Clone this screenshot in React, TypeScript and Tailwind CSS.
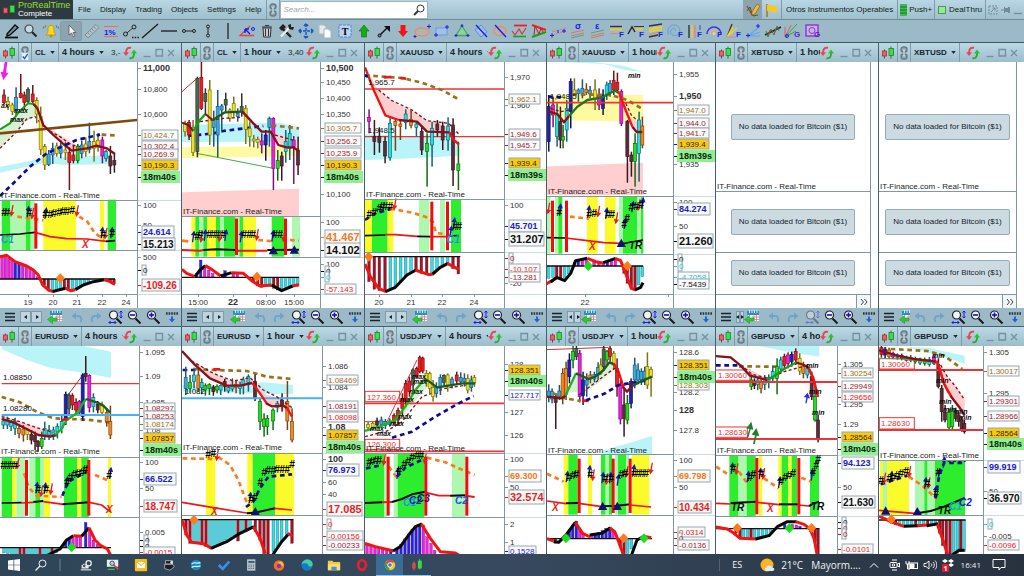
import type { ReactNode } from 'react'

/* ---------- palette ---------- */

const FILL = {
  r: '#f41c1c', y: '#f0e21a', c: '#3aa9e0', k: '#5e2c38', g: '#4a6a50', m: '#f41ce6',
  G: '#1fe01f', b: '#2020b4', o: '#f28a1c', t: '#22dfe8',
} as const

const WICK = {
  r: '#7a1018', y: '#7c7410', c: '#1c5878', k: '#3a1820', g: '#26382a', m: '#7c1076',
  G: '#126a12', b: '#14145c', o: '#7c4210', t: '#12686e',
} as const

const BAR = { ...FILL, k: '#a01420', b: '#2222f0', t: '#1ee6ee' } as const

const BAND = { g: '#2dee2d', l: '#aef7ae', y: '#fbfb2c' } as const

type Tone = keyof typeof FILL
type Candle = [x: number, high: number, low: number, top: number, bottom: number, tone: Tone]
type Bar = [x: number, y: number, tone: Tone]
type Band = [x: number, w: number, tone: keyof typeof BAND]
type Point = [x: number, y: number]
type Note = [x: number, y: number, text: string, color?: string, kind?: 'plain' | 'italic' | 'signal']

/* ---------- chart primitives, geometry is stored in thirds of a pixel ---------- */

function Line({ d, c, w = 6, dash }: { d: string; c: string; w?: number; dash?: boolean }) {
  return (
    <polyline
      points={d}
      fill="none"
      stroke={c}
      strokeWidth={w}
      strokeLinejoin="round"
      strokeDasharray={dash ? (w > 5 ? '14 11' : '9 7') : undefined}
    />
  )
}

const Area = ({ d, c }: { d: string; c: string }) => <polygon points={d} fill={c} />

function Candles({ data }: { data: Candle[] }) {
  return (
    <g>
      {data.map(([x, high, low, top, bottom, tone], i) => (
        <g key={i}>
          <rect x={x - 2} y={high} width={4.5} height={low - high} fill={WICK[tone]} />
          <rect x={x - 4.5} y={top} width={9} height={bottom - top} fill={FILL[tone]} stroke={WICK[tone]} strokeWidth={2} />
        </g>
      ))}
    </g>
  )
}

function Bars({ base, data, to }: { base: number; data: Bar[]; to: number }) {
  return (
    <g>
      {data.map(([x, y, tone], i) => (
        <rect key={i} x={x - 4} y={Math.min(y, base)} width={8} height={Math.abs(y - base)} fill={BAR[tone]} stroke="#5a2a4a" strokeWidth={1} />
      ))}
      <line x1={0} x2={to} y1={base} y2={base} stroke="#101010" strokeWidth={4} />
    </g>
  )
}

function Bands({ top, bottom, data }: { top: number; bottom: number; data: Band[] }) {
  return (
    <g>
      {data.map(([x, w, tone], i) => (
        <rect key={i} x={x} y={top} width={w} height={bottom - top} fill={BAND[tone]} />
      ))}
    </g>
  )
}

function Stops({ top, bottom, xs }: { top: number; bottom: number; xs: number[] }) {
  return <g>{xs.map(x => <rect key={x} x={x - 5} y={top + 7} width={9} height={bottom - top - 12} fill="#f40c0c" />)}</g>
}

const Arrow = ({ at: [x, y], c, down }: { at: Point; c: string; down?: boolean }) => (
  <path
    transform={`translate(${x} ${y})${down ? ' rotate(190)' : ' rotate(8)'}`}
    d="M-2 17V-4H-8L0-19L8-4H2V17Z"
    fill={c}
  />
)

const Arrows = ({ up = [], down = [] }: { up?: Point[]; down?: Point[] }) => (
  <g>
    {up.map((p, i) => <Arrow key={i} at={p} c="#1414c8" />)}
    {down.map((p, i) => <Arrow key={i} at={p} c="#f01c1c" down />)}
  </g>
)

const Diamond = ({ x, y, c = '#ff7a1a' }: { x: number; y: number; c?: string }) => (
  <path d={`M${x - 14} ${y}L${x} ${y - 15}L${x + 14} ${y}L${x} ${y + 15}Z`} fill={c} />
)

const Delta = ({ x, y }: { x: number; y: number }) => (
  <path d={`M${x - 14} ${y + 11}L${x} ${y - 14}L${x + 14} ${y + 11}Z`} fill="#10106e" />
)

const NOTE_CLASS = {
  plain: 'text-[8px]',
  italic: 'text-[7px] font-bold italic',
  signal: 'text-[10px] font-bold italic',
}

interface PlotProps {
  origin: Point
  splits: number[]
  credit: number
  notes?: Note[]
  hashes?: Point[]
  times?: [x: number, label: string, strong?: boolean][]
  children: ReactNode
}

function Plot({ origin: [ox, oy], splits, credit, notes = [], hashes = [], times = [], children }: PlotProps) {
  const px = (x: number) => Math.round((x - ox) / 3)
  const py = (y: number) => Math.round((y - oy) / 3)

  return (
    <svg className="h-full min-w-0 flex-1 bg-white">
      <g transform={`scale(0.33333) translate(${-ox} ${-oy})`}>{children}</g>
      {splits.map(y => <rect key={y} x={0} y={py(y)} width="100%" height={1} fill="#7f98a4" />)}
      {hashes.map(([x, y], i) => (
        <text key={i} x={px(x)} y={py(y) + 1} textAnchor="middle" className="text-[10px] font-bold italic">#</text>
      ))}
      {notes.map(([x, y, text, color = '#101010', kind = 'plain'], i) => (
        <text key={i} x={px(x)} y={py(y)} fill={color} className={NOTE_CLASS[kind]}>{text}</text>
      ))}
      <text x={1} y={py(credit)} fill="#222" className="text-[8px]">IT-Finance.com - Real-Time</text>
      {times.map(([x, label, strong], i) => (
        <g key={i}>
          <rect x={px(x)} y={py(763)} width={1} height={3} fill="#7f98a4" />
          <text x={px(x)} y={py(794)} textAnchor="middle" fill="#333" className={strong ? 'text-[9px] font-bold' : 'text-[8px]'}>{label}</text>
        </g>
      ))}
    </svg>
  )
}

/* ---------- price axis ---------- */

type Tick = [y: number, text: string, style?: string, size?: number]

const TAG_COLOR: Record<string, string> = {
  tan: '#9a7424', dred: '#a81c2c', red: '#f01c1c', blue: '#2020d0', black: '#101010',
  orange: '#f47a1c', cyan: '#1cc8d4', last: '#2a2a10', timer: '#10240c',
}

const SIZE_CLASS: Record<number, string> = {
  8: 'text-[8px]',
  9: 'text-[9px] font-bold',
  10: 'text-[10px] font-bold',
  11: 'text-[11px] font-bold',
}

const TAG_WIDTH: Record<number, number> = { 8: 4.6, 9: 5.5, 10: 5.6, 11: 6 }

function Axis({ oy, ticks, splits, width = 'w-[42px]' }: { oy: number; ticks: Tick[]; splits: number[]; width?: string }) {
  const py = (y: number) => Math.round((y - oy) / 3)
  return (
    <svg className={`h-full shrink-0 border-l border-[#7f98a4] bg-white ${width}`}>
      {splits.map(y => <rect key={y} x={0} y={py(y)} width="100%" height={1} fill="#cfdbe0" />)}
      {ticks.map(([y, text, style, size = 8], i) => {
        const c = py(y)
        const half = Math.round(size / 2) + 1
        const bg = style === 'last' ? '#fbc80c' : style === 'timer' ? '#90f090' : '#fafafa'
        return (
          <g key={i}>
            <rect x={0} y={c} width={3} height={1} fill={style ? TAG_COLOR[style] : '#7f98a4'} />
            {style && (
              <rect
                x={style === 'timer' ? 3 : 4}
                y={c - half}
                width={style === 'timer' ? 39 : Math.round(text.length * TAG_WIDTH[size]) - 1}
                height={half * 2}
                fill={bg}
                stroke={style === 'timer' ? 'none' : '#93a9b4'}
              />
            )}
            <text x={5} y={c + Math.round(size * 0.36)} fill={style ? TAG_COLOR[style] : '#333'} className={SIZE_CLASS[size]}>
              {text}
            </text>
          </g>
        )
      })}
    </svg>
  )
}

/* ---------- small icons ---------- */

const CandleIcon = () => (
  <svg viewBox="0 0 14 14" className="h-3.5 w-3.5 shrink-0">
    <path d="M3.500 3.500v9M10 .5v12" stroke="#4a3030" strokeWidth={0.8} />
    <rect x="1.500" y="5" width="4" height="5" fill="#e86464" stroke="#b02a2a" strokeWidth={0.8} />
    <rect x="8" y="2.500" width="4.500" height="7" fill="#3ddc4c" stroke="#168a22" strokeWidth={0.8} />
  </svg>
)

const ChainIcon = () => (
  <svg viewBox="0 0 10 14" className="h-3.5 w-2.5 shrink-0" fill="none" stroke="#6a7c86" strokeWidth={1.4}>
    <rect x="2" y="1" width="6" height="5" rx="2.5" fill="#94a8b2" />
    <rect x="2" y="8" width="6" height="5" rx="2.5" fill="#94a8b2" />
    <path d="M5 3.500v7" stroke="#eef4f6" strokeWidth={1} />
  </svg>
)

const RefreshIcon = () => (
  <svg viewBox="0 0 14 14" className="h-3.5 w-3.5" fill="none" strokeWidth={2}>
    <path d="M8 1.800C4.500 1 2.800 3.500 3 7" stroke="#e8484c" />
    <path d="M0 6.200h6L3 10z" fill="#e8484c" />
    <path d="M6.500 12.200C10 13 11.400 10 11 7" stroke="#28b028" />
    <path d="M8 7.500h6L11 3.500z" fill="#28c428" />
  </svg>
)

const Caret = () => (
  <svg viewBox="0 0 6 4" className="pointer-events-none h-[3px] w-[5px] shrink-0"><path d="M0 0h6L3 4z" fill="#1c2a32" /></svg>
)

function Glass({ sign, faded }: { sign?: 'minus' | 'plus' | 'arrows'; faded?: boolean }) {
  return (
    <svg viewBox="0 0 16 16" className={`h-4 w-4 ${faded ? 'opacity-40' : ''}`} fill="none">
      <path d="M9.500 9.500l5 5" stroke="#181818" strokeWidth={2} />
      <circle cx="6.500" cy="6" r="4" fill="#eef6fa" stroke="#222" strokeWidth={1.2} />
      {sign === 'arrows' && <path d="M14 2v7M12.500 3.500L14 2l1.500 1.500M12.500 7.500L14 9l1.500-1.500M2 13.500h7M3.500 12L2 13.500 3.500 15M7.500 12L9 13.500 7.500 15" stroke="#1a1af0" />}
      {(sign === 'minus' || sign === 'plus') && <path d="M4 6h5" stroke="#1010d0" strokeWidth={1.6} />}
      {sign === 'plus' && <path d="M6.500 3.500v5" stroke="#1010d0" strokeWidth={1.6} />}
    </svg>
  )
}

const CalendarIcon = () => (
  <svg viewBox="0 0 16 14" className="h-3.5 w-4 shrink-0">
    <rect x="4" y="2" width="11" height="9" fill="#f4f8fa" />
    <rect x="3" y="1" width="12" height="4" fill="#2a90c8" />
    <path d="M5.500 0v3M8 0v3M10.500 0v3M13 0v3" stroke="#d8f0fa" />
    <path d="M8 7h7M8 9.500h7M10 5v6M12.500 5v6" stroke="#e07878" strokeWidth={0.8} />
    <path d="M.5 9.500L5.500 5.500V8H10v3H5.500v2.500z" fill="#30c830" stroke="#1c8c1c" strokeWidth={0.5} />
  </svg>
)

const TurnIcon = ({ flip }: { flip?: boolean }) => (
  <svg viewBox="0 0 14 14" className={`h-3.5 w-3.5 ${flip ? '-scale-x-100' : ''}`}>
    <path d="M3 6h5c3.500 0 4 3 2.500 6" fill="none" stroke="#6da4cc" strokeWidth={1.8} />
    <path d="M6 2.500v7L1.500 6z" fill="#6da4cc" />
  </svg>
)

const ScrollDownIcon = () => (
  <svg viewBox="0 0 14 14" className="h-3.5 w-3.5">
    <path d="M1 3.500h12" stroke="#263640" strokeWidth={2.4} strokeDasharray="1.600 1" />
    <path d="M6 6.500h2V9h2l-3 3.500L4 9h2z" fill="#1c64d8" />
  </svg>
)

/* ---------- panel chrome ---------- */

const CELL = 'flex h-full shrink-0 items-center border-r border-[#7f9cab]'

function PanelHeader({ symbol, frame, extra, checked }: { symbol: string; frame?: string; extra?: string; checked?: boolean }) {
  return (
    <header className="flex h-[19px] shrink-0 items-center bg-linear-to-b from-[#bcd9e6] to-[#9dbdca]">
      <button aria-label="Chart style" className={`${CELL} w-[19px] justify-center`}><CandleIcon /></button>
      <button aria-label="Link group" className={`${CELL} relative w-[13px] justify-center`}>
        <ChainIcon />
        {checked && (
          <svg viewBox="0 0 8 8" className="absolute right-0.5 bottom-0.5 h-[7px] w-2">
            <rect width="8" height="8" rx="1" fill="#e4f0fa" />
            <path d="M1.500 4L3.500 6.500 7 1" fill="none" stroke="#1c50c8" strokeWidth={1.4} />
          </svg>
        )}
      </button>
      <label className={`${CELL} gap-1 px-[3px]`}>
        <select aria-label="Symbol" className="appearance-none text-[8px] font-bold text-[#16242c]"><option>{symbol}</option></select>
        <Caret />
      </label>
      <div className="flex min-w-0 flex-1 items-center overflow-hidden">
        {frame && (
          <label className="flex shrink-0 items-center gap-1 px-[3px]">
            <select aria-label="Time frame" className="appearance-none text-[9px] font-bold text-[#16242c]"><option>{frame}</option></select>
            <Caret />
          </label>
        )}
        {extra && <span className="pl-1 text-[8px] whitespace-nowrap text-[#1c2a32]">{extra}</span>}
      </div>
      <button aria-label="Sync" className="mr-1 shrink-0"><RefreshIcon /></button>
      <div className="flex shrink-0 pr-1">
        {['M1.500 8.500h7', 'M2 1.500h6.500v6.500H2z', 'M2 2l6 6M8 2L2 8'].map((d, i) => (
          <button key={d} aria-label={['Minimize', 'Maximize', 'Close'][i]} className="flex w-3 justify-center">
            <svg viewBox="0 0 10 10" className="h-2.5 w-2.5"><path d={d} fill="none" stroke="#7590a0" strokeWidth={1.3} /></svg>
          </button>
        ))}
      </div>
    </header>
  )
}

function PanelFooter({ faded }: { faded?: boolean }) {
  const tools: [string, ReactNode][] = [
    ['Undo', <TurnIcon />],
    ['Redo', <TurnIcon flip />],
    ['Fit zoom', <Glass sign="arrows" faded={faded} />],
    ['Zoom out', <Glass sign="minus" />],
    ['Zoom in', <Glass sign="plus" />],
    ['Scroll to end', <ScrollDownIcon />],
  ]
  return (
    <footer className="flex h-[18px] shrink-0 items-center bg-[#9bb9c6]">
      <button aria-label="Menu" className="flex w-5 shrink-0 justify-center">
        <svg viewBox="0 0 10 10" className="h-2.5 w-2.5"><path d="M0 1.500h10M0 5h10M0 8.500h10" stroke="#16242c" strokeWidth={1.4} /></svg>
      </button>
      <div className="flex min-w-0 flex-1 items-center justify-between overflow-hidden">
        <div className="flex min-w-0 overflow-hidden">
          {['M5 2L2 4l3 2z', 'M3 2l3 2-3 2z'].map((d, i) => (
            <button key={d} aria-label={i ? 'Next' : 'Previous'} className="flex h-3 w-[11px] min-w-0 items-center justify-center border border-[#7f9cab] bg-[#bed4de]">
              <svg viewBox="0 0 8 8" className="h-2 w-2 shrink-0"><path d={d} fill="#16242c" /></svg>
            </button>
          ))}
        </div>
        <button aria-label="Go to date" className="mr-1 shrink-0"><CalendarIcon /></button>
      </div>
      {tools.map(([label, icon]) => (
        <button key={label} aria-label={label} className="flex w-[19px] shrink-0 justify-center">{icon}</button>
      ))}
    </footer>
  )
}

interface PanelProps {
  symbol: string
  frame?: string
  extra?: string
  checked?: boolean
  footer?: boolean
  faded?: boolean
  children: ReactNode
}

function Panel({ symbol, frame, extra, checked, footer, faded, children }: PanelProps) {
  return (
    <section className="flex min-h-0 min-w-0 flex-col overflow-hidden bg-white">
      <PanelHeader symbol={symbol} frame={frame} extra={extra} checked={checked} />
      <div className="flex min-h-0 flex-1 overflow-hidden">{children}</div>
      {footer && <PanelFooter faded={faded} />}
    </section>
  )
}

function EmptyChart() {
  const notice = (
    <p className="rounded-xs border border-[#93abb8] bg-[#ccdbe2] px-[7px] py-[6px] text-[8px] leading-3 whitespace-nowrap text-[#16242c]">
      No data loaded for Bitcoin ($1)
    </p>
  )
  const pane = 'relative flex items-center justify-center border-b border-[#7f98a4]'
  return (
    <>
      <div className="flex min-w-0 flex-1 flex-col">
        <div className={`${pane} flex-[131]`}>
          {notice}
          <span className="absolute bottom-0 left-px text-[8px] leading-[8px] text-[#222]">IT-Finance.com - Real-Time</span>
        </div>
        <div className={`${pane} flex-[60]`}>{notice}</div>
        <div className={`${pane} flex-[42]`}>{notice}</div>
        <div className="flex h-[13px] justify-end">
          <button aria-label="Expand" className="flex w-3.5 items-center justify-center border-l border-[#7f98a4] bg-[#f2f6f8]">
            <svg viewBox="0 0 8 8" className="h-2 w-2"><path d="M1 1l2.500 3L1 7M4.500 1L7 4 4.500 7" fill="none" stroke="#444" /></svg>
          </button>
        </div>
      </div>
      <div className="w-2 shrink-0 border-l border-[#7f98a4] bg-white" />
    </>
  )
}

/* ---------- charts ---------- */

const RED = '#f01414'
const DARK_RED = '#86101c'
const GREEN = '#16a016'
const DARK_GREEN = '#1e5a1e'
const BLACK = '#080808'
const TAN = '#9a7018'
const NAVY = '#0c0c96'
const ORANGE = '#ff7a1a'
const CYAN_AREA = '#b8f4f8'
const PINK_AREA = '#ffcfd0'
const YELLOW_AREA = '#fdfaa0'
const GREEN_AREA = '#d8f0d4'
const LEVEL = '#ec3434'

function CrudeFourHours() {
  const splits = [479, 631, 763]
  return (
    <>
      <Plot
        origin={[0, 66]}
        splits={splits}
        credit={473}
        times={[[84, '19'], [158, '20'], [232, '21'], [306, '22'], [378, '24']]}
        hashes={[[12, 526], [22, 526], [88, 525], [135, 530], [150, 530], [162, 527], [176, 525], [188, 523], [202, 521], [215, 520], [308, 590], [335, 588]]}
        notes={[[2, 203, 'ax', BLACK, 'italic'], [42, 220, 'max', BLACK, 'italic'], [30, 246, 'max', BLACK, 'italic'], [2, 610, 'C1', '#2090f4', 'signal'], [246, 625, 'X', '#e81c1c', 'signal']]}
      >
        <Area d="0,380 90,363 130,350 200,352 330,345 330,372 200,375 130,370 60,385 0,398" c={CYAN_AREA} />
        <Area d="0,270 60,215 95,190 112,205 105,230 70,250 40,280 0,325" c={GREEN_AREA} />
        <Area d="135,262 165,275 205,300 240,322 215,332 180,302 150,280" c={PINK_AREA} />
        <Line d="0,325 50,275 80,237 105,230 135,265 180,290 215,315 250,322" c={DARK_RED} w={4} dash />
        <Candles
          data={[
            [12, 148, 192, 165, 188, 'r'], [24, 170, 210, 185, 200, 'y'], [37, 188, 225, 195, 215, 'y'], [48, 142, 230, 172, 212, 'c'],
            [62, 102, 175, 160, 172, 'r'], [73, 155, 210, 165, 188, 'r'], [84, 142, 192, 148, 185, 'g'], [98, 135, 190, 162, 185, 'r'],
            [110, 172, 250, 182, 222, 'y'], [122, 200, 345, 230, 328, 'y'], [134, 312, 390, 320, 375, 'y'], [146, 330, 378, 342, 374, 'c'],
            [158, 308, 372, 325, 345, 'c'], [170, 308, 350, 318, 340, 'y'], [182, 300, 355, 318, 340, 'c'], [196, 305, 360, 330, 338, 'y'],
            [208, 322, 450, 338, 368, 'r'], [220, 318, 370, 345, 362, 'r'], [233, 312, 370, 320, 362, 'G'], [245, 302, 355, 315, 340, 'c'],
            [257, 292, 350, 312, 335, 'y'], [268, 248, 340, 305, 328, 'c'], [282, 272, 365, 305, 325, 'y'], [294, 280, 335, 302, 322, 'y'],
            [307, 290, 370, 300, 348, 'm'], [318, 330, 365, 335, 355, 't'], [331, 318, 402, 348, 378, 'k'], [343, 340, 398, 362, 375, 'k'],
          ]}
        />
        <Line d="0,280 412,240" c="#7c4a0c" w={8} />
        <Line d="0,268 30,250 60,212 85,190 100,192 110,200" c={GREEN} />
        <Line d="100,192 112,205 130,255 160,285 190,312 215,332 260,325 290,317 320,325 345,342" c={DARK_RED} w={7} />
        <Line d="0,468 40,430 90,380 140,340 190,318 230,300 300,284" c={NAVY} w={8} dash />
        <Line d="305,284 345,286" c={TAN} w={8} dash />
        <path d="M14 66h8l-4 32h8l-16 22l-8-24h7z" fill="#f41ce6" />
        <Bands top={479} bottom={631} data={[[5, 26, 'g'], [31, 47, 'l'], [78, 14, 'g'], [92, 12, 'l'], [130, 98, 'y'], [300, 13, 'y'], [323, 25, 'g']]} />
        <Line d="0,585 60,582 105,577" c={BLACK} w={5} />
        <Line d="105,577 150,590 200,596 260,597 320,604" c={RED} w={5} />
        <Line d="318,604 345,602" c={BLACK} w={5} />
        <Line d="52,530 90,535 130,541" c={ORANGE} w={8} dash />
        <Line d="238,530 262,545 285,580 312,598" c={ORANGE} w={8} dash />
        <Stops top={483} bottom={631} xs={[108]} />
        <Arrows up={[[84, 515], [137, 520], [306, 578], [335, 578]]} down={[[36, 512], [98, 520], [232, 512], [318, 580]]} />
        <Bars
          base={717}
          to={345}
          data={[
            [6, 647, 'm'], [16, 649, 'm'], [26, 655, 'm'], [36, 662, 'm'], [46, 668, 'b'], [57, 668, 'b'], [68, 672, 'm'], [79, 676, 'm'],
            [90, 682, 'm'], [101, 695, 'm'], [112, 710, 'm'], [133, 735, 'k'], [145, 750, 'k'], [157, 752, 't'], [169, 750, 't'], [181, 746, 't'],
            [193, 745, 'k'], [205, 750, 'k'], [217, 750, 't'], [229, 745, 't'], [241, 738, 't'], [253, 732, 't'], [265, 727, 't'], [331, 725, 'k'], [342, 730, 'k'],
          ]}
        />
        <Line d="0,650 20,646 45,665 80,678 100,690 115,705 128,735 145,750 160,755" c={RED} w={9} />
        <Line d="158,755 175,750 197,745" c={BLACK} w={9} />
        <Line d="197,745 212,752 226,749" c={RED} w={9} />
        <Line d="226,749 250,735 280,725 312,719" c={BLACK} w={9} />
        <Line d="312,719 330,725 345,733" c={RED} w={9} />
        <Diamond x={181} y={715} />
      </Plot>
      <Axis
        oy={66}
        splits={splits}
        width="w-11"
        ticks={[
          [84, '11,000', undefined, 9], [148, '10,800'], [222, '10,600'], [285, '10,424.7', 'tan'], [318, '10,302.4', 'dred'], [343, '10,269.9', 'dred'],
          [375, '10,190.3', 'last'], [410, '18m40s', 'timer', 9], [496, '100'], [555, '50'], [577, '24.614', 'blue', 9], [612, '15.213', 'black', 10],
          [650, '500'], [690, '0', 'black'], [736, '-109.26', 'red', 10],
        ]}
      />
    </>
  )
}

function CrudeOneHour() {
  const splits = [529, 650, 763]
  return (
    <>
      <Plot
        origin={[6, 66]}
        splits={splits}
        credit={523}
        times={[[54, '15:00'], [159, '22', true], [258, '08:00'], [341, '15:00']]}
        hashes={[[50, 597], [60, 592], [88, 592], [100, 592], [112, 592], [130, 592], [192, 592], [206, 592], [218, 590], [286, 592], [300, 592]]}
      >
        <Area d="6,255 300,248 357,262 357,305 6,306" c={CYAN_AREA} />
        <Area d="6,322 357,318 357,348 6,354" c={YELLOW_AREA} />
        <Area d="6,457 357,446 357,529 6,529" c={PINK_AREA} />
        <Area d="270,272 300,285 350,300 352,328 310,322" c={PINK_AREA} />
        <Line d="6,155 50,116" c="#c03030" w={3} />
        <Line d="50,340 280,385" c="#48a848" w={3} />
        <Line d="25,288 100,280 130,273 250,258" c={NAVY} w={8} dash />
        <Candles
          data={[
            [15, 242, 290, 250, 275, 'y'], [27, 240, 300, 248, 285, 'r'], [39, 240, 348, 262, 338, 'y'], [52, 110, 352, 116, 335, 'g'],
            [64, 66, 210, 112, 205, 'r'], [76, 145, 222, 160, 185, 'g'], [89, 120, 315, 150, 285, 'y'], [101, 212, 320, 240, 262, 'c'],
            [113, 150, 352, 200, 285, 'c'], [125, 192, 270, 198, 210, 'c'], [137, 158, 215, 178, 195, 'g'], [149, 205, 245, 210, 235, 'y'],
            [161, 170, 230, 190, 215, 'y'], [173, 205, 245, 220, 230, 'c'], [185, 160, 230, 200, 215, 'g'], [197, 195, 312, 205, 268, 'y'],
            [209, 245, 320, 265, 290, 'y'], [221, 285, 322, 297, 303, 'y'], [233, 290, 325, 298, 308, 'y'], [245, 280, 340, 303, 315, 'm'],
            [257, 270, 362, 285, 315, 'b'], [268, 230, 320, 235, 262, 'c'], [280, 232, 450, 235, 385, 'm'], [293, 330, 422, 362, 385, 'G'],
            [305, 335, 422, 348, 378, 'k'], [317, 270, 368, 305, 335, 't'], [329, 255, 360, 280, 325, 't'], [341, 288, 432, 300, 320, 'm'], [354, 290, 405, 330, 375, 'k'],
          ]}
        />
        <Line d="60,245 130,235 185,232" c={DARK_RED} w={4} dash />
        <Line d="285,285 345,302" c={DARK_RED} w={4} dash />
        <Line d="6,248 25,255 40,273" c={DARK_RED} />
        <Line d="40,273 60,240 76,222" c={GREEN} w={7} />
        <Line d="76,222 98,240" c={DARK_RED} />
        <Line d="98,240 135,217 187,215" c={DARK_GREEN} w={7} />
        <Line d="187,215 220,250 245,275 272,275 295,315 320,322 340,322 355,332" c={DARK_RED} w={7} />
        <Line d="275,256 357,265" c={TAN} w={8} dash />
        <Bands
          top={529}
          bottom={650}
          data={[
            [34, 12, 'y'], [46, 12, 'g'], [58, 12, 'l'], [70, 12, 'g'], [82, 26, 'y'], [108, 12, 'g'], [120, 12, 'l'], [132, 34, 'g'],
            [178, 12, 'g'], [166, 12, 'l'], [190, 38, 'y'], [275, 38, 'g'], [336, 24, 'l'],
          ]}
        />
        <Line d="6,630 60,632 70,630" c={RED} w={6} />
        <Line d="70,630 110,628 165,630" c={BLACK} w={6} />
        <Line d="165,632 262,632" c={RED} w={6} />
        <Line d="262,630 357,629" c={BLACK} w={6} />
        <Line d="6,602 25,604" c={ORANGE} w={8} />
        <Line d="235,600 280,604" c={ORANGE} w={8} dash />
        <Line d="330,600 357,602" c={ORANGE} w={8} dash />
        <Stops top={529} bottom={650} xs={[170, 317]} />
        <Arrows up={[[40, 590], [75, 586], [137, 586], [183, 590], [278, 588]]} down={[[65, 590], [120, 588], [232, 584], [312, 588]]} />
        <Delta x={280} y={632} />
        <Delta x={343} y={630} />
        <Bars
          base={712}
          to={357}
          data={[
            [50, 700, 'b'], [62, 660, 'b'], [74, 678, 'm'], [86, 690, 'm'], [98, 700, 'm'], [135, 692, 'b'], [160, 702, 'm'], [172, 700, 'm'],
            [220, 728, 'k'], [233, 738, 'k'], [245, 742, 'k'], [257, 740, 't'], [269, 740, 't'], [281, 745, 'k'], [293, 750, 'k'],
            [305, 748, 't'], [317, 742, 't'], [329, 738, 't'], [341, 740, 't'], [353, 738, 't'],
          ]}
        />
        <Line d="6,688 20,700 45,710" c={RED} w={9} />
        <Line d="45,710 60,690 76,677" c={BLACK} w={9} />
        <Line d="76,677 95,688 122,708" c={RED} w={9} />
        <Line d="122,708 155,698" c={BLACK} w={9} />
        <Line d="155,698 190,700 215,722 240,738 275,735" c={RED} w={9} />
        <Line d="275,735 305,752 338,738" c={BLACK} w={9} />
        <Line d="338,738 357,734" c={RED} w={9} />
        <Diamond x={231} y={710} />
      </Plot>
      <Axis
        oy={66}
        splits={splits}
        width="w-11"
        ticks={[
          [84, '10,500', undefined, 9], [126, '10,450'], [175, '10,400'], [222, '10,350'], [264, '10,305.7', 'tan'], [304, '10,256.2', 'dred'],
          [340, '10,235.9', 'dred'], [375, '10,190.3', 'last'], [410, '18m40s', 'timer', 9], [463, '10,100'], [546, '100'],
          [592, '41.467', 'orange', 11], [630, '14.102', 'black', 11], [672, '100'], [692, '0', 'black'], [712, '0', 'cyan'], [747, '-57.143', 'red'],
        ]}
      />
    </>
  )
}

function GoldFourHours() {
  const splits = [478, 636, 763]
  return (
    <>
      <Plot
        origin={[9, 66]}
        splits={splits}
        credit={471}
        times={[[52, '20'], [147, '21'], [241, '22'], [337, '24']]}
        hashes={[[22, 530], [36, 524], [52, 512], [60, 508], [70, 506], [83, 506], [280, 568], [291, 566]]}
        notes={[[18, 136, '1,965.7'], [18, 280, '1,948.5'], [256, 610, 'C1', '#2090f4', 'signal']]}
      >
        <Area d="9,283 180,290 250,264 288,300 288,347 150,355 9,360" c={CYAN_AREA} />
        <Area d="15,88 45,145 70,168 110,195 150,210 195,242 230,248 288,280 270,280 195,274 165,245 110,240 70,225 35,150" c={PINK_AREA} />
        <Line d="9,147 430,147" c={LEVEL} w={4} />
        <Line d="9,290 430,290" c={LEVEL} w={4} />
        <Candles
          data={[
            [21, 208, 280, 232, 244, 'm'], [37, 240, 345, 290, 305, 'k'], [52, 262, 338, 290, 308, 'k'], [69, 290, 370, 305, 348, 'k'],
            [84, 232, 362, 250, 352, 't'], [100, 235, 332, 245, 256, 'o'], [115, 240, 300, 252, 260, 'o'], [131, 208, 268, 222, 248, 't'],
            [147, 210, 265, 238, 256, 'o'], [163, 245, 290, 252, 262, 't'], [179, 262, 345, 275, 330, 'k'], [195, 280, 440, 310, 335, 'G'],
            [210, 245, 380, 265, 315, 't'], [226, 240, 290, 252, 270, 'k'], [242, 245, 330, 258, 300, 'k'], [258, 232, 332, 258, 300, 't'],
            [273, 235, 438, 255, 390, 'k'], [289, 305, 450, 372, 392, 'G'],
          ]}
        />
        <Line d="50,150 90,182 150,210 195,242 260,250 290,282" c={DARK_RED} w={4} dash />
        <Line d="9,82 35,150 70,226 110,240" c={RED} w={7} />
        <Line d="110,240 165,245 195,275 262,277" c={DARK_RED} w={7} />
        <Line d="262,277 275,300 291,313" c={RED} w={7} />
        <Line d="9,106 120,114 180,128 240,150 290,178" c={TAN} w={8} dash />
        <Line d="9,106 18,110" c={NAVY} w={9} />
        <Line d="65,112 88,111" c={RED} w={8} />
        <Line d="115,114 132,116" c={RED} w={8} />
        <Bands top={478} bottom={636} data={[[9, 21, 'y'], [30, 47, 'g'], [77, 17, 'y'], [171, 31, 'l'], [234, 15, 'l'], [267, 30, 'g']]} />
        <Line d="9,587 70,585" c={BLACK} w={5} />
        <Line d="70,584 100,584 165,589" c={RED} w={5} />
        <Line d="165,589 205,590" c={BLACK} w={5} />
        <Line d="205,590 258,590" c={RED} w={5} />
        <Line d="258,588 290,587" c={BLACK} w={5} />
        <Line d="9,540 40,520 90,506" c={NAVY} w={8} dash />
        <Line d="85,506 150,518 190,530 212,545 222,578 262,586" c={ORANGE} w={8} dash />
        <Stops top={478} bottom={636} xs={[210, 257]} />
        <Arrows up={[[276, 550], [266, 575]]} down={[[99, 492]]} />
        <Bars
          base={650}
          to={295}
          data={[
            [21, 725, 'k'], [37, 748, 'k'], [52, 752, 'k'], [69, 755, 'k'], [85, 750, 't'], [100, 740, 't'], [116, 725, 't'], [131, 710, 't'], [147, 697, 't'],
            [162, 690, 'k'], [178, 700, 'k'], [194, 700, 'k'], [210, 700, 't'], [225, 692, 't'], [241, 680, 't'], [257, 668, 't'], [273, 686, 'k'], [289, 702, 'k'],
          ]}
        />
        <Line d="9,672 25,710 50,745 72,755" c={RED} w={9} />
        <Line d="70,755 100,742 135,705 162,690" c={BLACK} w={9} />
        <Line d="160,690 200,704 214,702" c={RED} w={9} />
        <Line d="212,702 235,682 258,670" c={BLACK} w={9} />
        <Line d="256,670 290,688" c={RED} w={9} />
        <Diamond x={20} y={650} />
      </Plot>
      <Axis
        oy={66}
        splits={splits}
        ticks={[
          [112, '1,970'], [195, '1,960'], [177, '1,962.1', 'tan'], [282, '1,949.6', 'dred'], [315, '1,945.7', 'dred'], [368, '1,939.4', 'last'],
          [404, '18m39s', 'timer', 9], [494, '100'], [558, '45.701', 'blue', 9], [597, '31.207', 'black', 11], [655, '0', 'dred'], [688, '-10.107', 'red'],
          [730, '-20'], [711, '-13.281', 'dred'],
        ]}
      />
    </>
  )
}

function GoldOneHour() {
  const splits = [468, 641, 763]
  return (
    <>
      <Plot
        origin={[9, 66]}
        splits={splits}
        credit={461}
        times={[[122, '22'], [372, '']]}
        hashes={[[45, 525], [136, 530], [150, 528], [192, 532], [205, 530], [240, 562], [248, 542], [262, 510], [275, 506], [291, 502]]}
        notes={[[18, 177, '1,948.5'], [253, 114, 'min', BLACK, 'italic'], [134, 630, 'X', '#e81c1c', 'signal'], [254, 627, 'TR', BLACK, 'signal']]}
      >
        <Area d="50,66 150,66 240,78 297,96 240,90 180,72" c={CYAN_AREA} />
        <Area d="6,165 297,165 297,245 6,240" c={YELLOW_AREA} />
        <Area d="6,380 297,368 297,466 6,466" c={PINK_AREA} />
        <Area d="235,195 262,235 290,250 290,278 262,262 245,225" c={PINK_AREA} />
        <Candles
          data={[
            [14, 165, 335, 200, 305, 'b'], [27, 170, 262, 195, 225, 'm'], [39, 190, 320, 225, 290, 't'], [49, 200, 325, 245, 300, 'k'],
            [57, 255, 325, 290, 300, 'G'], [68, 180, 305, 205, 270, 't'], [80, 115, 265, 125, 215, 'b'], [91, 115, 165, 150, 162, 'y'],
            [103, 145, 185, 150, 160, 'c'], [115, 118, 175, 145, 160, 'c'], [127, 130, 165, 148, 158, 'o'], [138, 138, 175, 152, 162, 'c'],
            [153, 118, 210, 150, 178, 'y'], [165, 145, 210, 165, 195, 'm'], [177, 148, 225, 165, 205, 'b'], [188, 125, 180, 135, 165, 't'],
            [198, 120, 170, 130, 158, 'c'], [209, 92, 165, 122, 150, 'r'], [220, 98, 160, 128, 150, 'r'], [232, 148, 258, 155, 250, 'm'],
            [250, 240, 428, 245, 350, 'k'], [262, 335, 410, 345, 365, 'k'], [273, 280, 440, 310, 365, 'G'], [285, 215, 425, 240, 340, 't'], [295, 230, 325, 258, 315, 'o'],
          ]}
        />
        <Line d="12,170 60,172" c={NAVY} w={8} dash />
        <Line d="85,163 200,165 250,180 297,208" c={TAN} w={8} dash />
        <Line d="6,188 390,188" c={LEVEL} w={5} />
        <Line d="20,205 50,215 75,210" c={DARK_RED} w={4} dash />
        <Line d="245,190 262,225 280,242" c={DARK_RED} w={4} dash />
        <Line d="6,212 40,222 60,247 75,228" c={DARK_RED} w={7} />
        <Line d="75,228 100,200 130,180 175,172 212,152 225,158" c="#1c7a1c" w={7} />
        <Line d="225,158 245,210 265,260" c={RED} w={7} />
        <Line d="265,260 278,276 295,276" c={DARK_RED} w={7} />
        <Bands
          top={468}
          bottom={641}
          data={[[6, 14, 'l'], [33, 10, 'l'], [43, 12, 'g'], [129, 32, 'y'], [183, 32, 'y'], [225, 12, 'l'], [237, 42, 'g'], [279, 12, 'l'], [291, 7, 'g']]}
        />
        <Line d="6,593 68,594" c={BLACK} w={5} />
        <Line d="65,594 130,602 180,608 232,610" c={RED} w={5} />
        <Line d="232,612 262,606 297,600" c={BLACK} w={5} />
        <Line d="78,530 135,536" c={ORANGE} w={8} dash />
        <Stops top={475} bottom={641} xs={[26, 68]} />
        <Arrows
          up={[[48, 508], [134, 514], [187, 520], [243, 550], [266, 500], [296, 490]]}
          down={[[14, 505], [164, 514], [218, 534], [285, 495]]}
        />
        <Delta x={232} y={610} />
        <Bars
          base={678}
          to={297}
          data={[
            [14, 715, 't'], [27, 712, 't'], [38, 710, 'k'], [50, 715, 'k'], [62, 715, 't'], [74, 702, 't'], [92, 668, 'm'], [103, 660, 'b'], [115, 658, 'm'],
            [127, 657, 'm'], [150, 660, 'm'], [165, 668, 'm'], [178, 670, 'm'], [190, 665, 'b'], [202, 660, 'm'], [214, 657, 'm'],
            [240, 700, 'k'], [250, 730, 'k'], [262, 745, 'k'], [273, 748, 'k'], [284, 735, 't'], [295, 710, 't'],
          ]}
        />
        <Line d="6,732 38,714" c={RED} w={9} />
        <Line d="20,726 38,712 62,722 80,700 95,662 130,655" c={BLACK} w={9} />
        <Line d="130,655 155,665 180,670" c={RED} w={9} />
        <Line d="178,668 215,655" c={BLACK} w={9} />
        <Line d="213,655 230,662 245,700 262,745 275,750" c={RED} w={9} />
        <Line d="273,750 290,742 297,728" c={BLACK} w={9} />
        <Diamond x={133} y={678} c="#1cdc1c" />
        <Diamond x={250} y={678} />
      </Plot>
      <Axis
        oy={66}
        splits={splits}
        ticks={[
          [103, '1,955'], [168, '1,950', undefined, 9], [210, '1,947.0', 'tan'], [248, '1,944.0', 'dred'], [280, '1,941.7', 'dred'], [373, '1,935'],
          [312, '1,939.4', 'last'], [347, '18m39s', 'timer', 9], [485, '100'], [508, '84.274', 'blue', 9], [557, '50'], [602, '21.260', 'black', 11],
          [658, '0', 'black'], [679, '0', 'cyan'], [710, '-4.7058', 'cyan'], [733, '-7.5439', 'black'],
        ]}
      />
    </>
  )
}

function EuroFourHours() {
  const splits = [395, 577]
  return (
    <>
      <Plot
        origin={[0, 63]}
        splits={splits}
        credit={388}
        hashes={[[10, 430], [20, 430], [32, 429], [44, 428], [115, 502], [137, 502], [200, 480], [210, 464], [222, 457], [234, 454], [245, 450], [256, 440], [328, 458]]}
        notes={[[8, 165, '1.08850'], [8, 258, '1.08280'], [318, 565, 'X', '#e81c1c', 'signal']]}
      >
        <Area d="5,63 250,63 333,80 333,158 230,140 150,128 80,105 5,72" c={CYAN_AREA} />
        <Area d="5,270 60,290 110,305 140,320 170,318 160,335 110,328 60,305 5,285" c={PINK_AREA} />
        <Line d="5,176 420,176" c={LEVEL} w={4} />
        <Line d="200,215 250,148" c="#a03030" w={3} />
        <Line d="5,216 60,232 110,260 160,280 260,284 330,292" c={TAN} w={8} dash />
        <Candles
          data={[
            [10, 278, 312, 288, 300, 't'], [22, 275, 312, 285, 300, 't'], [33, 285, 318, 292, 305, 't'], [45, 278, 330, 290, 310, 't'],
            [57, 300, 340, 310, 325, 'o'], [70, 300, 350, 312, 330, 'o'], [82, 310, 345, 315, 328, 'y'], [94, 315, 358, 328, 345, 'k'],
            [105, 320, 375, 332, 350, 'k'], [114, 345, 380, 350, 365, 'k'], [125, 320, 372, 340, 365, 'G'], [134, 290, 345, 310, 330, 't'],
            [147, 300, 345, 315, 330, 't'], [160, 305, 345, 315, 330, 't'], [172, 295, 340, 305, 320, 't'], [185, 270, 325, 290, 310, 't'],
            [197, 200, 300, 208, 285, 'b'], [207, 205, 270, 210, 250, 'g'], [217, 205, 255, 212, 240, 'r'], [228, 220, 265, 232, 255, 'r'],
            [238, 225, 268, 230, 262, 'm'], [248, 145, 288, 150, 275, 'b'], [257, 93, 170, 145, 155, 'k'], [268, 148, 262, 152, 248, 'm'],
            [280, 205, 262, 218, 245, 't'], [293, 228, 265, 238, 255, 'k'], [306, 230, 272, 240, 262, 'y'], [320, 250, 305, 262, 290, 'o'], [331, 242, 342, 290, 330, 'o'],
          ]}
        />
        <Line d="5,270 420,270" c="#48b0f4" w={6} />
        <Line d="5,275 60,290 110,308 160,322" c={DARK_RED} w={4} dash />
        <Line d="5,282 40,292 80,312 115,330 150,335 170,330" c={DARK_RED} w={7} />
        <Line d="165,330 182,315 200,285 235,262 245,240 258,222" c="#1cb41c" w={7} />
        <Line d="258,222 290,232 310,242 330,262" c={DARK_GREEN} w={7} />
        <Line d="185,285 205,282" c={RED} w={7} />
        <Bands
          top={395}
          bottom={577}
          data={[
            [5, 32, 'g'], [37, 12, 'y'], [49, 28, 'l'], [88, 18, 'l'], [106, 14, 'g'], [120, 12, 'l'], [132, 18, 'y'],
            [192, 40, 'g'], [232, 12, 'y'], [244, 22, 'g'], [324, 9, 'y'],
          ]}
        />
        <Line d="5,534 65,533" c={BLACK} w={5} />
        <Line d="65,534 100,532" c={RED} w={5} />
        <Line d="100,531 130,528" c={BLACK} w={6} />
        <Line d="130,530 190,538" c={RED} w={5} />
        <Line d="188,538 268,532" c={BLACK} w={6} />
        <Line d="268,532 305,540 330,560" c={RED} w={5} />
        <Line d="72,445 88,490 110,512 185,516" c={ORANGE} w={8} dash />
        <Line d="285,450 328,468" c={ORANGE} w={8} dash />
        <Line d="187,512 205,470 262,440" c={NAVY} w={8} dash />
        <Stops top={398} bottom={577} xs={[80, 267]} />
        <Arrows up={[[110, 488], [135, 490], [200, 472], [331, 444]]} down={[[54, 415], [125, 498], [154, 492], [264, 428]]} />
        <Bars
          base={668}
          to={333}
          data={[
            [12, 684, 't'], [24, 686, 't'], [36, 690, 't'], [48, 700, 't'], [60, 700, 'k'], [72, 700, 'k'], [84, 700, 't'], [96, 700, 't'], [108, 700, 't'],
            [120, 700, 'k'], [132, 700, 't'], [144, 700, 't'], [156, 692, 'k'], [168, 684, 't'], [197, 650, 'b'], [208, 642, 'b'], [219, 638, 'm'], [230, 636, 'm'],
            [241, 632, 'm'], [257, 592, 'b'], [269, 620, 'm'], [280, 645, 'm'], [292, 658, 'm'], [303, 664, 'm'],
          ]}
        />
        <Line d="140,692 180,672 200,645 220,632" c={BLACK} w={9} />
        <Line d="220,632 247,634" c={RED} w={9} />
        <Line d="245,634 267,608" c={BLACK} w={9} />
        <Line d="267,608 285,645 300,660 322,672 333,692" c={RED} w={9} />
        <Diamond x={215} y={667} c="#1cdc1c" />
      </Plot>
      <Axis
        oy={63}
        splits={splits}
        ticks={[
          [80, '1.095'], [153, '1.09'], [232, '1.085'], [316, '1.08'], [250, '1.08297', 'dred'], [272, '1.08253', 'dred'], [297, '1.08174', 'tan'],
          [340, '1.07857', 'last'], [375, '18m40s', 'timer', 9], [411, '100'], [490, '50'], [463, '66.522', 'blue', 9], [542, '18.747', 'red', 10],
          [622, '0.005'], [645, '0', 'black'], [662, '0', 'black'], [680, '-0.0015', 'red'],
        ]}
      />
    </>
  )
}

function EuroOneHour() {
  const splits = [383, 570]
  return (
    <>
      <Plot
        origin={[546, 63]}
        splits={splits}
        credit={376}
        hashes={[[625, 395], [638, 392], [752, 532], [764, 526], [781, 480], [792, 450], [805, 444], [820, 444], [832, 442], [845, 442], [860, 442], [876, 426]]}
        notes={[[554, 208, '1.082'], [634, 570, 'X', '#e81c1c', 'signal']]}
      >
        <Area d="548,180 700,188 790,172 879,180 879,208 548,200" c={CYAN_AREA} />
        <Area d="548,78 580,108 640,145 700,168 755,165 800,210 850,225 876,245 870,262 815,245 790,225 755,175 680,182 630,160 580,118" c={PINK_AREA} />
        <Line d="548,135 590,135" c={NAVY} w={8} dash />
        <Line d="585,132 640,135 740,138 800,155 878,162" c={TAN} w={8} dash />
        <Line d="640,133 660,133" c={RED} w={8} />
        <Candles
          data={[
            [557, 125, 210, 158, 190, 'c'], [570, 150, 205, 172, 190, 'G'], [582, 128, 190, 150, 170, 't'], [595, 135, 200, 150, 190, 'o'],
            [605, 160, 208, 172, 188, 't'], [616, 175, 212, 182, 195, 'G'], [628, 175, 210, 178, 190, 'G'], [640, 180, 212, 186, 200, 'k'],
            [651, 178, 205, 185, 195, 'G'], [662, 178, 210, 182, 195, 't'], [674, 162, 200, 170, 185, 'k'], [685, 182, 205, 188, 198, 't'],
            [697, 160, 200, 182, 192, 't'], [708, 165, 205, 178, 188, 'o'], [720, 170, 208, 180, 190, 't'], [730, 155, 208, 165, 180, 't'],
            [745, 148, 200, 155, 172, 't'], [765, 148, 228, 170, 218, 'k'], [780, 222, 315, 230, 290, 'G'], [792, 265, 335, 282, 305, 'G'],
            [802, 270, 330, 280, 305, 'G'], [819, 250, 315, 255, 288, 'G'], [832, 228, 262, 235, 248, 't'], [846, 205, 260, 225, 240, 'k'],
            [862, 168, 315, 230, 288, 'o'], [876, 250, 352, 290, 345, 'o'],
          ]}
        />
        <Line d="546,220 970,220" c="#48b0f4" w={6} />
        <Line d="575,108 640,145 700,168 750,158 790,195 830,215 876,248" c={DARK_RED} w={4} dash />
        <Line d="546,78 580,115 630,160 680,182 720,182 757,174" c={DARK_RED} w={7} />
        <Line d="757,174 780,205 800,235" c={RED} w={7} />
        <Line d="798,235 815,244 850,242 862,250" c={DARK_RED} w={7} />
        <Line d="860,248 876,275" c={RED} w={7} />
        <Bands top={383} bottom={570} data={[[618, 28, 'y'], [742, 16, 'y'], [758, 68, 'g'], [826, 56, 'y']]} />
        <Line d="546,532 640,548 740,564" c={RED} w={5} />
        <Line d="740,565 770,562 825,550" c={BLACK} w={6} />
        <Line d="823,550 876,555" c={RED} w={5} />
        <Line d="548,400 650,402" c={ORANGE} w={8} dash />
        <Line d="655,396 690,420 715,465 745,545" c={ORANGE} w={8} dash />
        <Line d="738,546 760,530 780,490 805,455 876,448" c={NAVY} w={8} dash />
        <Arrows up={[[750, 518]]} down={[[652, 390]]} />
        <Delta x={766} y={560} />
        <Bars
          base={584}
          to={880}
          data={[
            [558, 630, 'k'], [570, 655, 'k'], [582, 652, 't'], [594, 652, 't'], [606, 660, 'k'], [618, 665, 'k'], [630, 665, 't'], [642, 665, 't'],
            [654, 660, 't'], [666, 655, 't'], [678, 645, 't'], [690, 640, 't'], [702, 632, 't'], [714, 648, 'k'], [726, 625, 't'], [738, 620, 'k'], [750, 610, 't'],
            [766, 620, 'k'], [780, 645, 'k'], [792, 686, 'k'], [804, 690, 'k'], [820, 680, 't'], [832, 668, 't'], [845, 650, 't'], [860, 635, 't'], [876, 655, 'k'],
          ]}
        />
        <Line d="546,584 560,630 575,652 610,656 635,670" c={RED} w={9} />
        <Line d="633,670 680,650 720,625 762,605" c={BLACK} w={9} />
        <Line d="760,605 780,640 796,686" c={RED} w={9} />
        <Line d="818,690 845,650 865,628" c={BLACK} w={9} />
        <Line d="863,626 878,632" c={RED} w={9} />
        <Diamond x={582} y={584} />
      </Plot>
      <Axis
        oy={63}
        splits={splits}
        ticks={[
          [123, '1.086'], [185, '1.084'], [164, '1.08469', 'tan'], [244, '1.08191', 'dred'], [277, '1.08098', 'red'], [305, '1.08', undefined, 9],
          [330, '1.07857', 'last'], [365, '18m40s', 'timer', 9], [402, '100', undefined, 9], [436, '76.973', 'blue', 9], [470, '60'], [508, '40'],
          [552, '17.085', 'red', 11], [598, '0', 'red'], [633, '-0.00156', 'red'], [661, '-0.00233', 'dred'],
        ]}
      />
    </>
  )
}

function YenFourHours() {
  const splits = [385, 577]
  const max = (x: number, y: number): Note => [x, y, 'max', BLACK, 'italic']
  return (
    <>
      <Plot
        origin={[9, 63]}
        splits={splits}
        credit={378}
        hashes={[[20, 420], [30, 418], [42, 415], [52, 413], [110, 445], [125, 427], [138, 417], [150, 404], [165, 400], [178, 398]]}
        notes={[
          [15, 224, '127.360', LEVEL], [15, 367, '126.300', LEVEL], max(150, 162), max(152, 176), max(140, 208), max(114, 232), max(108, 282), max(84, 304),
          max(44, 332), max(24, 318), [122, 542, 'C1', '#2090f4', 'signal'], [142, 538, 'C2', '#1414d0', 'signal'], [166, 530, 'C3', '#10106e', 'signal'],
          [278, 536, 'C2', '#1c50f0', 'signal'],
        ]}
      >
        <Area d="80,300 150,215 185,160 200,180 150,240 110,290" c={GREEN_AREA} />
        <rect x={9} y={199} width={104} height={31} fill="none" stroke={LEVEL} strokeWidth={3} />
        <rect x={9} y={343} width={104} height={31} fill="none" stroke={LEVEL} strokeWidth={3} />
        <Line d="9,235 430,235" c={LEVEL} w={5} />
        <Line d="9,379 430,379" c={LEVEL} w={5} />
        <Line d="9,290 75,290 165,105" c={LEVEL} w={3} />
        <Line d="90,338 150,320 220,275 290,235 335,213" c={NAVY} w={8} dash />
        <Line d="9,335 75,318 120,290 180,215 250,190 340,176" c={DARK_RED} w={4} dash />
        <Candles
          data={[
            [18, 290, 315, 298, 308, 'y'], [32, 288, 315, 295, 306, 'y'], [45, 278, 308, 288, 300, 'k'], [58, 275, 308, 285, 298, 'c'],
            [70, 282, 312, 290, 302, 'c'], [83, 280, 305, 288, 298, 'c'], [96, 265, 302, 272, 292, 'r'], [108, 248, 300, 256, 285, 'r'],
            [121, 205, 275, 220, 250, 'r'], [131, 165, 245, 175, 230, 'r'], [142, 155, 215, 168, 200, 'r'], [153, 130, 195, 135, 180, 'g'],
            [164, 125, 160, 130, 155, 'r'], [173, 92, 145, 98, 140, 'r'], [182, 95, 145, 100, 138, 'r'], [193, 135, 185, 145, 165, 'y'],
            [203, 140, 208, 145, 190, 'y'], [213, 165, 230, 188, 215, 'y'], [223, 172, 218, 185, 205, 'c'], [235, 148, 210, 158, 190, 'c'],
            [246, 148, 185, 152, 172, 'g'], [257, 145, 200, 150, 180, 'y'], [270, 155, 190, 162, 180, 'c'], [284, 140, 178, 150, 168, 'r'],
            [296, 142, 180, 158, 170, 'c'], [307, 145, 185, 160, 170, 'c'], [317, 148, 205, 160, 195, 'y'], [328, 152, 200, 165, 188, 'c'], [337, 150, 185, 158, 172, 'y'],
          ]}
        />
        <Line d="9,318 60,302 100,285 130,245 160,195 188,162" c="#1cb41c" w={7} />
        <Line d="188,162 205,172 225,187 260,182 300,175 340,175" c={DARK_GREEN} w={7} />
        <Bands top={385} bottom={577} data={[[9, 58, 'g'], [67, 8, 'l'], [95, 12, 'l'], [107, 80, 'g'], [270, 40, 'l']]} />
        <Line d="9,534 60,532" c={BLACK} w={6} />
        <Line d="60,532 90,531" c={RED} w={6} />
        <Line d="90,531 120,522 150,508 190,500" c={BLACK} w={6} />
        <Line d="190,502 230,512 268,512" c={RED} w={5} />
        <Line d="265,512 310,511" c={BLACK} w={6} />
        <Line d="310,512 338,516" c={RED} w={6} />
        <Line d="80,425 105,458" c={ORANGE} w={8} dash />
        <Line d="195,398 250,412 290,430 338,450" c={ORANGE} w={8} dash />
        <Line d="12,430 60,420" c={NAVY} w={8} dash />
        <Line d="105,455 130,428 190,400" c={NAVY} w={8} dash />
        <Stops top={388} bottom={577} xs={[79, 192, 315]} />
        <Arrows up={[[107, 445]]} down={[[67, 404], [190, 400]]} />
        <Bars
          base={690}
          to={340}
          data={[
            [15, 660, 'm'], [27, 665, 'm'], [39, 668, 'm'], [50, 670, 'm'], [62, 672, 'm'], [74, 675, 'm'], [86, 678, 'b'], [105, 672, 'b'], [117, 658, 'b'],
            [129, 642, 'b'], [140, 628, 'b'], [151, 614, 'b'], [162, 604, 'b'], [173, 598, 'b'], [184, 600, 'm'], [195, 635, 'm'], [207, 655, 'm'], [218, 676, 'm'],
          ]}
        />
        <Line d="9,655 40,665 95,678" c={RED} w={9} />
        <Line d="93,678 115,665 140,630 160,605 180,597" c={BLACK} w={9} />
        <Line d="178,597 205,640 235,680 280,684 290,690" c={RED} w={9} />
      </Plot>
      <Axis
        oy={63}
        splits={splits}
        ticks={[
          [118, '128'], [134, '128.351', 'last'], [169, '18m40s', 'timer', 9], [211, '127.717', 'blue'], [262, '127'], [330, '126'], [402, '100'], [485, '50'],
          [452, '69.300', 'orange', 9], [517, '32.574', 'red', 11], [597, '2'], [650, '1'], [677, '0.1528', 'blue'],
        ]}
      />
    </>
  )
}

function YenOneHour() {
  const splits = [388, 569]
  return (
    <>
      <Plot
        origin={[555, 63]}
        splits={splits}
        credit={383}
        hashes={[[622, 464], [634, 460], [642, 456], [685, 456], [728, 468], [746, 468], [776, 456], [788, 452], [815, 452], [828, 452], [840, 452], [853, 452]]}
        notes={[[570, 557, 'X', '#e81c1c', 'signal']]}
      >
        <Area d="720,378 760,365 800,355 870,333 870,388 720,388" c={CYAN_AREA} />
        <Line d="553,74 740,67" c="#d03030" w={3} />
        <Area d="615,205 642,145 690,165 745,110 765,128 720,165 680,195" c={GREEN_AREA} />
        <Candles
          data={[
            [560, 178, 232, 198, 215, 'c'], [570, 190, 235, 200, 222, 'c'], [581, 205, 312, 215, 232, 'k'], [592, 180, 225, 198, 215, 'c'],
            [602, 130, 238, 145, 215, 'o'], [612, 110, 225, 130, 208, 'o'], [622, 85, 175, 105, 155, 'b'], [633, 63, 130, 80, 105, 'G'],
            [643, 63, 105, 70, 95, 'g'], [653, 75, 232, 85, 215, 'm'], [663, 140, 240, 165, 212, 'b'], [674, 145, 215, 165, 180, 'c'],
            [685, 138, 175, 150, 162, 'o'], [697, 140, 172, 148, 162, 'c'], [708, 112, 165, 128, 150, 'c'], [716, 100, 150, 120, 145, 'y'],
            [725, 63, 138, 72, 125, 'g'], [735, 75, 120, 80, 105, 'G'], [744, 63, 110, 70, 95, 'r'], [755, 78, 135, 85, 120, 'y'],
            [765, 100, 215, 130, 185, 'r'], [775, 165, 298, 180, 282, 'm'], [786, 190, 335, 240, 280, 'k'], [796, 210, 298, 235, 285, 'G'],
            [807, 160, 250, 170, 235, 'b'], [818, 98, 190, 120, 165, 'c'], [828, 115, 178, 135, 165, 'c'], [838, 130, 180, 140, 165, 'c'],
            [848, 125, 180, 138, 160, 'c'], [856, 82, 192, 125, 180, 'y'], [867, 125, 215, 133, 158, 'y'],
          ]}
        />
        <Line d="575,205 600,218 655,228" c={TAN} w={8} dash />
        <Line d="660,226 680,228" c={RED} w={8} />
        <Line d="672,226 730,205 770,180 860,165" c={NAVY} w={8} dash />
        <Line d="650,210 690,180 730,150 760,128 785,180 830,175" c={DARK_RED} w={4} dash />
        <Line d="555,215 600,220 612,210" c={DARK_RED} w={7} />
        <Line d="610,212 630,170 642,145" c="#1cb41c" w={7} />
        <Line d="642,145 680,162 700,155 725,135 742,112 757,118" c={DARK_GREEN} w={7} />
        <Line d="755,115 770,140 785,190" c={RED} w={7} />
        <Line d="783,186 795,200 812,182" c={DARK_RED} w={7} />
        <Line d="812,182 835,170 870,155" c={DARK_GREEN} w={7} />
        <Bands
          top={388}
          bottom={569}
          data={[
            [605, 14, 'y'], [619, 28, 'g'], [678, 12, 'y'], [717, 14, 'g'], [731, 10, 'l'], [741, 9, 'g'], [759, 10, 'l'],
            [768, 24, 'g'], [792, 9, 'l'], [810, 52, 'y'],
          ]}
        />
        <Line d="555,528 612,536" c={RED} w={5} />
        <Line d="612,535 650,534" c={BLACK} w={6} />
        <Line d="650,535 720,545" c={RED} w={5} />
        <Line d="720,544 765,542 805,538" c={BLACK} w={6} />
        <Line d="805,540 867,546" c={RED} w={5} />
        <Line d="555,446 605,470" c={ORANGE} w={8} dash />
        <Stops top={394} bottom={569} xs={[652, 754, 805]} />
        <Arrows
          up={[[615, 455], [682, 438], [722, 458], [745, 458], [768, 465], [815, 436]]}
          down={[[694, 450], [735, 462], [795, 440], [868, 430]]}
        />
        <Delta x={722} y={544} />
        <Delta x={766} y={544} />
        <Bars
          base={641}
          to={870}
          data={[
            [580, 654, 'k'], [622, 615, 'b'], [632, 600, 'b'], [643, 588, 'b'], [653, 612, 'm'], [663, 628, 'm'], [690, 630, 'm'], [700, 626, 'b'],
            [710, 622, 'b'], [721, 616, 'b'], [732, 610, 'b'], [743, 608, 'b'], [753, 618, 'm'], [775, 665, 'k'], [786, 690, 'k'], [797, 685, 't'], [808, 672, 't'],
          ]}
        />
        <Line d="555,641 575,648" c={RED} w={9} />
        <Line d="575,650 590,652 612,630 640,592" c={BLACK} w={9} />
        <Line d="640,592 662,625 685,636" c={RED} w={9} />
        <Line d="683,630 720,625 745,608" c={BLACK} w={9} />
        <Line d="743,608 758,620 770,650 785,692" c={RED} w={9} />
        <Line d="808,692 825,645 846,634" c={BLACK} w={9} />
        <Line d="844,634 868,638" c={RED} w={9} />
        <Diamond x={612} y={640} c="#1cdc1c" />
        <Diamond x={785} y={640} />
        <Diamond x={846} y={640} c="#1cdc1c" />
      </Plot>
      <Axis
        oy={63}
        splits={splits}
        ticks={[
          [81, '128.6'], [200, '128.2'], [181, '128.303', 'tan'], [121, '128.351', 'last'], [156, '18m40s', 'timer', 9], [255, '128', undefined, 9],
          [315, '127.8'], [406, '100'], [485, '50'], [454, '69.798', 'orange', 9], [545, '10.434', 'red', 10], [622, '0.0314', 'red'], [638, '0', 'dred'], [660, '-0.0136', 'dred'],
        ]}
      />
    </>
  )
}

function PoundFourHours() {
  const splits = [390, 573]
  return (
    <>
      <Plot
        origin={[6, 63]}
        splits={splits}
        credit={383}
        hashes={[[58, 438], [108, 464], [118, 457], [140, 452], [200, 478], [212, 466], [225, 460], [238, 454], [298, 450], [305, 430], [312, 412]]}
        notes={[
          [12, 159, '1.30060', LEVEL], [12, 330, '1.28630', LEVEL], [276, 128, 'min', BLACK, 'italic'], [286, 208, 'min', BLACK, 'italic'],
          [294, 270, 'min', BLACK, 'italic'], [50, 558, 'TR', BLACK, 'signal'], [290, 556, 'TR', BLACK, 'signal'], [158, 560, 'X', '#e81c1c', 'signal'],
        ]}
      >
        <Area d="135,63 316,63 316,95 220,80" c={CYAN_AREA} />
        <rect x={4} y={135} width={104} height={31} fill="none" stroke={LEVEL} strokeWidth={3} />
        <rect x={4} y={306} width={96} height={31} fill="none" stroke={LEVEL} strokeWidth={3} />
        <Area d="75,118 100,130 150,155 160,165 110,152" c={PINK_AREA} />
        <Line d="6,121 70,121" c={NAVY} w={8} dash />
        <Line d="75,124 190,125" c={TAN} w={8} dash />
        <Candles
          data={[
            [112, 148, 195, 165, 185, 'G'], [121, 160, 192, 168, 182, 'k'], [131, 155, 195, 165, 178, 't'], [141, 158, 205, 172, 190, 'o'],
            [152, 150, 195, 160, 178, 't'], [164, 148, 190, 158, 172, 't'], [176, 122, 172, 140, 160, 't'], [189, 100, 208, 125, 160, 'G'],
            [200, 95, 145, 105, 132, 't'], [211, 86, 135, 95, 122, 'r'], [222, 82, 130, 90, 115, 'm'], [233, 80, 125, 88, 110, 'b'],
            [245, 70, 120, 80, 105, 'r'], [257, 85, 150, 100, 138, 'y'], [268, 110, 160, 125, 145, 'o'], [280, 118, 160, 130, 150, 't'],
            [293, 140, 225, 155, 215, 'k'], [303, 180, 290, 215, 285, 'G'], [312, 270, 352, 285, 342, 'k'],
          ]}
        />
        <Line d="4,171 370,171" c={LEVEL} w={6} />
        <Line d="4,342 370,342" c={LEVEL} w={6} />
        <Line d="80,120 115,148 165,160 210,140 265,125" c={DARK_RED} w={4} dash />
        <Line d="4,93 50,97 80,122 108,152 160,165" c={DARK_RED} w={7} />
        <Line d="160,165 185,150 210,132 248,112" c={GREEN} w={7} />
        <Line d="246,112 270,120 283,128" c={DARK_RED} w={7} />
        <Line d="283,128 298,160 312,216" c={RED} w={8} />
        <path d="M274 235l3-18h-8l12-14 7 17h-7l-3 15z" fill="#2a2af0" />
        <path d="M98 338l8-26-9-2 15-20 6 24-8-1-7 25z" fill="#1c8030" />
        <path d="M117 357l6-26-10-2 14-20 9 24-8-1-6 25z" fill="#1c8030" />
        <Bands
          top={390}
          bottom={573}
          data={[[46, 26, 'g'], [72, 26, 'l'], [98, 27, 'g'], [135, 10, 'y'], [193, 10, 'y'], [203, 20, 'g'], [223, 10, 'y'], [233, 16, 'g'], [288, 27, 'g']]}
        />
        <Line d="6,535 50,537" c={RED} w={5} />
        <Line d="50,534 128,530" c={BLACK} w={6} />
        <Line d="128,532 195,539" c={RED} w={5} />
        <Line d="195,538 252,538" c={BLACK} w={6} />
        <Line d="252,540 285,543" c={RED} w={5} />
        <Line d="285,543 300,535 315,530" c={BLACK} w={6} />
        <Line d="6,425 45,450" c={ORANGE} w={8} dash />
        <Line d="75,440 102,478" c={ORANGE} w={8} dash />
        <Line d="150,460 194,490" c={ORANGE} w={8} dash />
        <Line d="262,458 292,470" c={ORANGE} w={8} dash />
        <Stops top={392} bottom={573} xs={[129, 255]} />
        <Arrows up={[[54, 430], [102, 455], [138, 446], [196, 472], [294, 450]]} down={[[69, 432], [149, 446]]} />
        <Bars
          base={611}
          to={316}
          data={[
            [66, 625, 'k'], [78, 640, 'k'], [88, 640, 't'], [100, 640, 't'], [111, 642, 'k'], [122, 642, 't'], [134, 640, 't'], [146, 636, 't'], [158, 632, 't'],
            [170, 622, 't'], [212, 598, 'b'], [235, 598, 'm'], [247, 600, 'm'], [258, 604, 'b'], [290, 620, 'k'], [303, 650, 'k'], [312, 690, 'k'],
          ]}
        />
        <Line d="4,606 40,612 60,625 78,640 127,642" c={RED} w={9} />
        <Line d="125,642 165,632 190,605 220,590 247,590" c={BLACK} w={9} />
        <Line d="245,590 270,598 288,612 300,640 310,692" c={RED} w={9} />
        <Diamond x={70} y={609} />
        <Diamond x={226} y={610} c="#1cdc1c" />
        <Diamond x={293} y={609} />
      </Plot>
      <Axis
        oy={63}
        splits={splits}
        width="w-[41px]"
        ticks={[
          [117, '1.305'], [145, '1.30254', 'tan'], [183, '1.29949', 'dred'], [238, '1.295'], [217, '1.29656', 'red'], [298, '1.29'], [337, '1.28564', 'last'],
          [372, '18m40s', 'timer', 9], [414, '94.123', 'blue', 9], [486, '50'], [531, '21.630', 'black', 10], [592, '0', 'black'], [610, '0', 'dred'], [628, '0', 'dred'],
          [673, '-0.0101', 'red'],
        ]}
      />
    </>
  )
}

function PoundOneHour() {
  const splits = [405, 570]
  const min = (x: number, y: number): Note => [x, y, 'min', BLACK, 'italic']
  return (
    <>
      <Plot
        origin={[495, 63]}
        splits={splits}
        credit={399}
        hashes={[[502, 474], [525, 468], [537, 464], [550, 460], [562, 454], [576, 446], [640, 482], [665, 512], [672, 450]]}
        notes={[
          [501, 125, '1.30060', LEVEL], [501, 303, '1.28630', LEVEL], min(655, 98), min(666, 173), min(674, 237), min(688, 262), min(724, 268), min(734, 284),
          [672, 568, 'TR', BLACK, 'signal'], [704, 556, 'C1', '#20a0e0', 'signal'], [736, 544, 'C2', '#1414d8', 'signal'],
        ]}
      >
        <Area d="580,66 640,68 752,92 752,116 690,95" c={CYAN_AREA} />
        <Area d="680,120 700,155 725,185 752,222 752,270 720,235 700,195" c={PINK_AREA} />
        <rect x={496} y={101} width={105} height={31} fill="none" stroke={LEVEL} strokeWidth={3} />
        <rect x={496} y={278} width={105} height={34} fill="none" stroke={LEVEL} strokeWidth={3} />
        <Line d="530,72 640,78 690,92 745,132" c={TAN} w={8} dash />
        <Candles
          data={[
            [502, 63, 98, 68, 88, 'r'], [513, 66, 100, 72, 90, 'b'], [525, 68, 102, 75, 95, 'o'], [537, 80, 102, 86, 96, 'm'],
            [550, 85, 104, 90, 98, 'c'], [563, 86, 106, 92, 100, 'r'], [577, 92, 110, 98, 106, 'c'], [590, 90, 112, 98, 106, 'o'],
            [604, 95, 116, 100, 110, 'G'], [618, 98, 120, 102, 114, 't'], [632, 98, 122, 104, 116, 'G'], [646, 96, 125, 104, 118, 't'],
            [660, 90, 120, 98, 115, 'm'], [673, 100, 190, 118, 185, 'k'], [683, 180, 290, 190, 260, 'k'], [693, 240, 292, 262, 285, 'k'],
            [705, 250, 312, 262, 308, 'G'], [715, 240, 312, 252, 305, 'G'], [725, 248, 290, 258, 280, 'k'], [734, 260, 305, 270, 290, 'k'],
            [743, 275, 320, 285, 312, 'k'], [751, 285, 326, 295, 320, 'k'],
          ]}
        />
        <Line d="495,100 560,102 660,112 690,140" c="#4cb04c" w={3} />
        <Line d="495,135 808,135" c={LEVEL} w={6} />
        <Line d="495,315 808,315" c={LEVEL} w={6} />
        <Line d="680,120 700,155 725,185 750,222" c={DARK_RED} w={4} dash />
        <Line d="495,76 550,92 600,102 668,110" c={DARK_RED} w={7} />
        <Line d="668,108 678,135 690,175 700,195 712,215" c={RED} w={8} />
        <Line d="710,213 735,245 752,272" c={DARK_RED} w={7} />
        <Bands
          top={405}
          bottom={570}
          data={[[498, 9, 'y'], [507, 12, 'l'], [519, 66, 'y'], [603, 28, 'l'], [631, 10, 'g'], [641, 22, 'l'], [663, 90, 'g']]}
        />
        <Line d="495,556 600,565" c={RED} w={5} />
        <Line d="600,566 650,558 690,545 752,519" c={BLACK} w={6} />
        <Line d="585,455 625,482 668,522" c={ORANGE} w={8} dash />
        <Line d="500,478 580,452" c={NAVY} w={8} dash />
        <Line d="665,520 675,455 690,414 755,414" c={NAVY} w={8} dash />
        <Line d="685,408 755,408" c={BLACK} w={5} dash />
        <Arrows up={[[532, 455], [634, 474], [664, 500], [675, 448], [690, 412]]} down={[[512, 460], [587, 440], [645, 474]]} />
        <Delta x={515} y={558} />
        <Delta x={610} y={560} />
        <Bars
          base={585}
          to={755}
          data={[
            [532, 595, 'k'], [545, 600, 'k'], [557, 603, 't'], [569, 605, 't'], [581, 603, 't'], [593, 602, 't'], [605, 600, 'k'], [617, 602, 't'], [629, 600, 't'],
            [641, 600, 'k'], [653, 600, 't'], [665, 598, 't'], [677, 625, 'k'], [686, 662, 'k'], [697, 690, 'k'], [708, 690, 'k'], [719, 690, 't'], [730, 685, 't'],
            [740, 680, 'k'], [750, 680, 't'],
          ]}
        />
        <Line d="495,573 530,590 572,605" c={RED} w={9} />
        <Line d="570,604 612,602" c={BLACK} w={9} />
        <Line d="610,602 640,600" c={RED} w={9} />
        <Line d="638,602 672,596" c={BLACK} w={9} />
        <Line d="670,598 685,640 702,692" c={RED} w={9} />
        <Line d="712,692 735,676 752,676" c={BLACK} w={9} />
        <Diamond x={532} y={583} />
      </Plot>
      <Axis
        oy={63}
        splits={splits}
        width="w-[41px]"
        ticks={[
          [80, '1.305'], [138, '1.30017', 'tan'], [205, '1.295'], [229, '1.29301', 'dred'], [272, '1.28966', 'dred'], [324, '1.28564', 'last'],
          [358, '18m40s', 'timer', 9], [425, '99.919', 'blue', 9], [498, '50'], [520, '36.970', 'black', 10], [598, '0', 'cyan'], [632, '-0.005'],
          [660, '-0.0096', 'red'],
        ]}
      />
    </>
  )
}

/* ---------- top bars ---------- */

const F = <text x="12" y="16" fill="#1a1af0" className="text-[8px] font-bold">F</text>
const G = <text x="12" y="16" fill="#5a1ad8" className="text-[8px] font-bold">G</text>

const DRAW_TOOLS: [string, ReactNode][] = [
  ['Draw', <><path d="M5 13L13 4l3 2.500L8 14l-3 1z" fill="#7890a0" stroke="#101010" strokeWidth={1.4} /><path d="M3 16.500h13" stroke="#111" strokeWidth={1.8} /></>],
  ['Zoom', <><circle cx="8" cy="8" r="4" fill="#c2dbe6" stroke="#444" strokeWidth={1.2} /><path d="M11 11l4.500 4.500" stroke="#222" strokeWidth={2} /></>],
  ['Alert', <><path d="M5 14h10l-2-3V8c0-5-6-5-6 0v3z" fill="#f8d81c" stroke="#b08a10" strokeWidth={0.7} /><circle cx="10" cy="15" r="1.500" fill="#c09010" /><path d="M3 5L2 8M17 5l1 3M5 4L4 7M15 4l1 3" stroke="#667" strokeWidth={0.7} /></>],
  ['Select', <path d="M8 4v10l2.500-2 2 4 1.500-1-2-3.500h3z" fill="#f4f4f4" stroke="#555" strokeWidth={0.8} />],
  ['Ruler', <path d="M3 14L14 3.500l3 3L6 17zM6 12l1.500 1.500M8 10l1.500 1.500M10 8l1.500 1.500M12 6l1.500 1.500" fill="#b4c2ca" stroke="#70808a" strokeWidth={0.8} />],
  ['Percent', <><path d="M3 5.500h14M3 15.500h14" stroke="#e86a6a" /><text x="3" y="14" fill="#1a1af0" className="text-[8px] font-bold">1%</text></>],
  ['Path', <><path d="M4 13.500L13 6" stroke="#333" /><circle cx="4.500" cy="13" r="2" fill="#9bb" stroke="#222" /><circle cx="13" cy="6" r="2" fill="#9bb" stroke="#222" /><path d="M11 16.500h7" stroke="#222" strokeDasharray="1.500 1.200" strokeWidth={1.5} /></>],
  ['Line', <path d="M2 17L18 3" stroke="#1a1a1a" strokeWidth={1.3} />],
  ['Horizontal', <path d="M2 10h16" stroke="#1a1a1a" strokeWidth={1.3} />],
  ['Segment', <><path d="M5 10h10" stroke="#222" /><circle cx="5" cy="10" r="1.500" fill="#9bb" stroke="#222" /><circle cx="15" cy="10" r="1.500" fill="#9bb" stroke="#222" /></>],
  ['Vertical segment', <><path d="M10 5v10" stroke="#222" /><circle cx="10" cy="5.500" r="1.500" fill="#9bb" stroke="#222" /><circle cx="10" cy="14.500" r="1.500" fill="#9bb" stroke="#222" /></>],
  ['Vertical', <path d="M10 2v16" stroke="#1a1a1a" strokeWidth={1.2} />],
  ['Angle', <><path d="M17 14.500H3L13 5" fill="none" stroke="#e04848" strokeWidth={1.300} /><path d="M8 8l5 5M8 8v4M8 8h4" stroke="#1a1af0" strokeWidth={1.400} /><circle cx="16" cy="8" r="1.500" fill="none" stroke="#1a1af0" /></>],
  ['Delete', <><path d="M6 7h8l-.7 9H6.700z" fill="#c8ccce" stroke="#333" /><path d="M5 6h10M8 4.500h4M8.500 8v7M11.500 8v7" stroke="#333" /></>],
  ['Tools', <><path d="M6 7l9 9" stroke="#222" strokeWidth={2.4} /><path d="M14 6L5 15.500" stroke="#e8eef0" strokeWidth={2.400} /><path d="M3 7l4-4 3 3-4 4zM12 4l3-1v3l3 0-1 3-4-1z" fill="#222" /></>],
  ['Move', <path d="M10 3v14M3 10h14M8 5l2-2.500L12 5M8 15l2 2.500 2-2.500M5 8l-2.500 2L5 12M15 8l2.500 2-2.500 2" stroke="#1458c8" strokeWidth={1.400} fill="#1458c8" strokeDasharray="3 1" />],
  ['Copy', <><path d="M4 4h5l2 2v7H4z" fill="#e4eaec" stroke="#b0bcc2" /><path d="M9 8h4l3 2v7H9z" fill="#fff" stroke="#a8b4ba" /></>],
  ['Text', <><rect x="4" y="4" width="12" height="12" fill="#bcd4f0" stroke="#4c88e0" strokeDasharray="3 1" /><text x="10" y="13.500" textAnchor="middle" className="font-['Liberation_Serif',serif] text-[10px] font-bold">T</text></>],
  ['Arrow up', <path d="M7.500 16v-6H5l5-6 5 6h-2.500v6z" fill="#18a818" stroke="#107010" strokeWidth={0.6} />],
  ['Arrow', <><path d="M5 15l8-8" stroke="#111" strokeWidth={1.500} /><circle cx="5.500" cy="14.500" r="1.500" fill="#789" stroke="#111" /><path d="M10 5h6v6z" fill="#111" /></>],
  ['Arrow down', <path d="M7.500 4v6H5l5 6 5-6h-2.500V4z" fill="#f41414" />],
  ['Ellipse', <><ellipse cx="9" cy="11" rx="7" ry="4" fill="#b0b4b4" stroke="#e89060" strokeWidth={1.300} /><path d="M16 3.500v4M14 5.500h4M2 14v3M0.500 15.500h3" stroke="#1a1af0" /></>],
  ['Rectangle', <><rect x="4" y="7" width="11" height="7" fill="#a4c0e4" stroke="#6c98e0" /><path d="M15 4v4M13 6h4M4 12v4M2 14h4" stroke="#1a1af0" /></>],
  ['Triangle', <><path d="M10 5l6 9.500H4z" fill="#a0c8b0" stroke="#38b048" strokeWidth={1.300} /><path d="M10 3v3M8.500 5h3M4 13v3M2.500 14.500h3M16 13v3M14.500 14.500h3" stroke="#1a1af0" /></>],
  ['Rotated box', <><path d="M4 9l6-5 6 7-6 5z" fill="#a4c0e4" stroke="#5c8ce0" /><path d="M5 4l11 12" stroke="#1a1af0" strokeWidth={1.300} /></>],
  ['Rotated ellipse', <><ellipse cx="10" cy="10" rx="6" ry="4.500" fill="#b0b4b4" stroke="#e89060" strokeWidth={1.300} /><path d="M5 4l11 12" stroke="#1a1af0" strokeWidth={1.300} /></>],
  ['Top pattern', <><path d="M4 4.500h13" stroke="#f02020" strokeWidth={1.800} /><path d="M2 10l3 4 4-6 3 5 4-6" fill="none" stroke="#e03030" strokeWidth={1.200} /><path d="M3 15.500h13" stroke="#18a018" strokeWidth={1.500} /></>],
  ['Wedge', <><path d="M3 4l14 5" stroke="#f02020" strokeWidth={2} /><path d="M3 16l14-5" stroke="#18a018" strokeWidth={2} /><path d="M5 14l1-9 4 8 2-6 2 4" fill="none" stroke="#c02020" /></>],
  ['Channel', <><path d="M3 11l14-4M3 14l14-4" stroke="#d88068" strokeDasharray="3 1" /><path d="M3 12.500v4M1 14.500h4M15 8v4M13 10h4M9 9v3" stroke="#1a1af0" /></>],
  ['Std deviation', <><text x="7" y="8" fill="#1a1af0" className="text-[9px] font-bold">σ</text><path d="M3 12l13-3M3 15l13-3" stroke="#d87868" /><path d="M3 17l13-3" stroke="#58a868" /></>],
  ['Std error', <><text x="7" y="8" fill="#1a1af0" className="text-[9px] font-bold">ε</text><path d="M3 12l13-3" stroke="#58a868" /><path d="M3 15l13-3M3 17l13-3" stroke="#d87868" /></>],
  ['Fib retracement', <><path d="M3 5.500h12" stroke="#333" strokeWidth={1.400} /><path d="M3 8.500h12" stroke="#e8c840" strokeWidth={2} /><path d="M3 12.500h9" stroke="#e08878" />{F}</>],
  ['Fib extension', <><path d="M1 13l4-7 3 5" fill="none" stroke="#222" strokeWidth={1.400} /><path d="M7 5.500h10" stroke="#333" /><path d="M8 8.500h8" stroke="#e8c840" strokeWidth={2} />{F}</>],
  ['Fib channel', <><path d="M3 5l13-2M3 16l9-2" stroke="#333" strokeWidth={1.300} /><path d="M3 8l13-2M3 10.500l13-2" stroke="#e8d040" strokeWidth={2} /><path d="M3 13.500l9-2" stroke="#e08878" />{F}</>],
  ['Fib spiral', <><path d="M9 10c2-2-2-4-4-1s2 7 6 5 4-9-2-10-9 6-6 10" fill="none" stroke="#60a0e0" />{F}</>],
  ['Fib zones', <><path d="M4 4v13" stroke="#333" strokeWidth={1.400} /><path d="M7 4v13" stroke="#e8c840" strokeWidth={1.600} /><path d="M10 4v13" stroke="#e08878" strokeWidth={1.500} /><path d="M15 4v5" stroke="#1a50e0" />{F}</>],
  ['Fib arcs', <><path d="M2 13a7 7 0 0 1 14 0" fill="none" stroke="#3838e8" strokeWidth={1.600} /><path d="M5 13a4 4 0 0 1 8 0" fill="none" stroke="#e8a890" strokeWidth={1.600} /><circle cx="9" cy="12.500" r="1.500" fill="#f0e040" />{F}</>],
  ['Fib fan', <><path d="M3 16L8 3" stroke="#333" strokeWidth={1.300} /><path d="M3 16l10-9M3 16l6-10" stroke="#e8d040" strokeWidth={1.500} /><path d="M3 16h9" stroke="#e08878" />{F}</>],
  ['Fan', <><path d="M4 15l12-4M4 15l11-9M4 15h12" stroke="#60a8e8" strokeWidth={1.200} /><path d="M2 14.500h4M4 12.500v4M12 5h4M14 3v4" stroke="#1a1af0" /></>],
  ['Regression', <><path d="M2 14L18 6" stroke="#222" strokeWidth={1.600} /><path d="M3 10l2 6 3-8 3 6 3-9 2 5" fill="none" stroke="#28902c" /><path d="M5 15l2-6M11 13l2-6" stroke="#d83838" /></>],
  ['Gann fan', <><path d="M3 16L15 3M3 16l11-6" stroke="#38a848" /><path d="M3 16V6M3 16L9 4" stroke="#d86060" /><circle cx="5" cy="15" r="1.500" fill="none" stroke="#1a1af0" />{G}</>],
  ['Gann box', <><rect x="4" y="4" width="12" height="11" fill="#c8b4e4" stroke="#8838c8" strokeWidth={1.400} /><circle cx="10" cy="9.500" r="3" fill="none" stroke="#8838c8" />{G}</>],
]

function MenuBar() {
  const divided = 'flex h-full items-center border-l border-[#7f9cab]'
  return (
    <header className="flex h-5 shrink-0 items-center border-b border-[#6f8c9a] bg-linear-to-b from-[#b9d6e4] to-[#9fbfcc] text-[8px] text-[#101c22]">
      <div className="flex h-full w-[73px] shrink-0 items-center gap-0.5 bg-[#2e3a42] pl-0.5">
        <CandleIcon />
        <div>
          <p className="text-[9px] leading-[9px] text-[#9ade2c]">ProRealTime</p>
          <p className="text-[8px] leading-2 text-white">Complete</p>
        </div>
      </div>
      <nav className="flex gap-[9px] px-[5px]">
        {['File', 'Display', 'Trading', 'Objects', 'Settings', 'Help'].map(item => <button key={item}>{item}</button>)}
      </nav>
      <button aria-label="Link" className="flex h-full items-center border-x border-[#7f9cab] px-px"><ChainIcon /></button>
      <label className="flex h-[18px] w-[148px] shrink-0 items-center border border-[#9cb4c0] bg-white px-0.5">
        <input aria-label="Search" placeholder="Search..." className="min-w-0 flex-1 text-[8px] italic outline-none placeholder:text-[#a4a4a4]" />
        <svg viewBox="0 0 12 12" className="h-3 w-3" fill="none" stroke="#333"><circle cx="7.500" cy="4.500" r="3.500" /><path d="M5 7l-4 4" strokeWidth={2} /></svg>
      </label>
      <div className="ml-auto flex h-full items-center">
        <button aria-label="Draw mode" className="flex h-full w-[19px] items-center justify-center bg-[#8ba4b0]">
          <svg viewBox="0 0 16 16" className="h-4 w-4" fill="none">
            <path d="M2 4l5 9 3-4" stroke="#c82828" strokeWidth={1.2} />
            <path d="M2 9l3-4 3 9 5-1" stroke="#287028" />
            <path d="M7 10l5-8 3 2-5 8-3 1z" fill="#f4b83c" stroke="#8a5a18" strokeWidth={0.7} />
          </svg>
        </button>
        <button aria-label="Flag" className="flex w-[19px] justify-center">
          <svg viewBox="0 0 14 14" className="h-3.5 w-3.5"><path d="M2 1v13" stroke="#a06810" strokeWidth={1.300} /><path d="M2 2c4-1 5 2 10 1v6c-5 1-6-2-10-1z" fill="#fcc81c" /></svg>
        </button>
        <button className={`${divided} px-1`}>Otros Instrumentos Operables</button>
        <button className={`${divided} gap-0.5 px-0.5`}>
          <svg viewBox="0 0 7 12" className="h-3 w-[7px]"><path d="M0 0h7v12H0z" fill="#38c048" /><path d="M0 3h7M0 6h7M0 9h7" stroke="#1c7028" /></svg>
          Push+
        </button>
        <button className={`${divided} gap-[3px] px-[3px]`}>
          <span className="h-2 w-2 border border-[#4a9a50] bg-[#90ee90]" />
          DealThru
        </button>
        <div className="flex h-full items-center gap-[3px] border-l border-[#7f9cab] px-0.5">
          <svg viewBox="0 0 10 10" className="h-2.5 w-2.5" fill="none" stroke="#748c98"><rect x="1" y="1" width="8" height="8" strokeDasharray="2 1" /><path d="M3 7l4-4M4.500 3H7v2.500" /></svg>
          <svg viewBox="0 0 10 10" className="h-2.5 w-2.5" fill="#748c98"><path d="M0 4.500h3V2h1v1h3V2h2v6H7V7H4v1H3V5.500H0z" /></svg>
          <svg viewBox="0 0 8 10" className="h-2.5 w-2"><path d="M0 8.500h8" stroke="#748c98" strokeWidth={1.300} /></svg>
        </div>
      </div>
    </header>
  )
}

function DrawBar() {
  return (
    <div className="flex h-[23px] shrink-0 items-center border-b border-[#3f5965] bg-[#9bb9c6] pl-0.5">
      <div className="flex w-[820px] max-w-full">
        {DRAW_TOOLS.map(([label, icon]) => (
          <button
            key={label}
            aria-label={label}
            className={`flex h-5 min-w-0 flex-1 items-center justify-center ${label === 'Select' ? 'rounded-xs border border-[#7f9cab] bg-[#8ba4b0]' : ''}`}
          >
            <svg viewBox="0 0 20 20" className="h-5 w-5 shrink-0">{icon}</svg>
          </button>
        ))}
      </div>
    </div>
  )
}

/* ---------- taskbar ---------- */

const APPS: [string, ReactNode][] = [
  ['Robot', <><path d="M3 8h8v4H3z" fill="#e8ecee" /><circle cx="11" cy="6" r="3" fill="none" stroke="#e8ecee" strokeWidth={1.500} /><circle cx="6" cy="9" r="2" fill="#345" stroke="#e8ecee" /><path d="M2 13.500h12" stroke="#c8ccd0" strokeWidth={1.500} /></>],
  ['Snipping', <><rect x="1" y="2" width="13" height="8" fill="#e8f0f4" /><path d="M8 7l6 6" stroke="#d84848" strokeWidth={1.800} /><circle cx="7" cy="6" r="2.500" fill="#bcd" stroke="#345" /><path d="M2 13h8" stroke="#48b848" strokeWidth={1.500} /></>],
  ['Mail', <><rect x="1" y="1" width="14" height="14" rx="1" fill="#fbbc14" /><rect x="3.500" y="4.500" width="9" height="7" fill="#fff" /><path d="M3.500 4.500l4.500 4 4.500-4" fill="none" stroke="#d89808" /></>],
  ['Printer', <><path d="M4 3h8v4H4zM3 7h9l2 3-5 4-6-2z" fill="#1c1c22" stroke="#c8ccd0" strokeWidth={0.800} /><circle cx="11" cy="5" r="1.500" fill="#e8ecee" /></>],
  ['Sync', <><circle cx="8" cy="8" r="6" fill="#1884c8" /><path d="M3 7c3-4 5 1 10-2M3 11c3-3 5 0 10-2" fill="none" stroke="#d8f0fc" strokeWidth={1.500} /></>],
  ['To Do', <path d="M2 8l4.500 4.500L14 4" fill="none" stroke="#3c90f0" strokeWidth={3} />],
  ['Calculator', <><rect x="3.500" y="1.500" width="9.500" height="13" fill="#b8c4cc" /><path d="M5 4.500h7" stroke="#2c5078" strokeWidth={2} /><path d="M5 8h7M5 10h7M5 12h7" stroke="#4a6478" strokeDasharray="1.500 1" /></>],
  ['Firefox', <><circle cx="8" cy="8.500" r="6" fill="#f86c1c" /><path d="M4 3l3 2c4-3 7 1 6 5" fill="#fcc02c" /><circle cx="8" cy="9" r="2.500" fill="#7038d8" /></>],
  ['Edge', <><circle cx="8" cy="8" r="6.500" fill="#1878c8" /><path d="M2 7c1-7 12-7 12.500 0 0 4-6 3-5 1-1-3-6-2-7.500-1z" fill="#40d0a0" /></>],
  ['Explorer', <><path d="M1 3h5l1.500 1.500H15V14H1z" fill="#f8c83c" /><path d="M1 7h14v7H1z" fill="#fcdc74" /><path d="M5 14v-4h6v4z" fill="#4890d8" /></>],
  ['Opera', <ellipse cx="8" cy="8" rx="4.500" ry="5.500" fill="none" stroke="#f01c2c" strokeWidth={3} />],
  ['Chrome', <><circle cx="8" cy="8" r="6" fill="#f8c81c" /><path d="M3 5a6 6 0 0 1 10.500 0H8L6 9z" fill="#e84034" /><path d="M3 5L7 12l.5 2A6 6 0 0 1 3 5z" fill="#30a050" /><circle cx="8" cy="8" r="2.600" fill="#3878e8" stroke="#fff" /></>],
  ['ProRealTime', <><path d="M4.500 4v10M11 1v12" stroke="#aaa" strokeWidth={0.800} /><rect x="2.500" y="6" width="4" height="6" fill="#e84444" /><rect x="9" y="3" width="4.500" height="9" fill="#38d848" /></>],
]

function Taskbar() {
  return (
    <footer className="flex h-[22px] shrink-0 items-center bg-linear-to-r from-[#2e4558] via-[#36495e] to-[#28323f] font-['Open_Sans',sans-serif] text-[10px] text-[#eef2f4]">
      <button aria-label="Start" className="flex w-[27px] justify-center">
        <svg viewBox="0 0 12 12" className="h-3 w-3" fill="#fff"><path d="M0 1.500L5.500.8v4.900H0zM6.200.7L12 0v5.700H6.200zM0 6.300h5.500v4.900L0 10.500zM6.200 6.300H12V12l-5.800-.7z" /></svg>
      </button>
      <button aria-label="Search Windows" className="flex w-[27px] justify-center">
        <svg viewBox="0 0 12 12" className="h-3 w-3" fill="none" stroke="#eef2f4"><circle cx="7.500" cy="4.500" r="3.500" /><path d="M5 7l-4.500 4.500" strokeWidth={1.300} /></svg>
      </button>
      <span className="mr-[11px] ml-[5px] h-3 w-0.5 bg-[#4d6478]" />
      <div className="flex h-full w-[359px]">
        {APPS.map(([label, icon]) => (
          <button
            key={label}
            aria-label={label}
            className={`flex min-w-0 flex-1 items-center justify-center border-b ${
              label === 'Chrome' ? 'border-[#8cc4f0] bg-[#3c6c94]' : label === 'ProRealTime' ? 'border-[#8cc4f0]' : 'border-transparent'
            }`}
          >
            <svg viewBox="0 0 16 16" className="h-3.5 w-3.5 shrink-0">{icon}</svg>
          </button>
        ))}
      </div>
      <div className="ml-auto flex items-center pr-[18px]">
        <span className="mr-3 h-3 w-px bg-[#4d6478]" />
        <span className="text-[9px]">ES</span>
        <svg viewBox="0 0 16 16" className="ml-[17px] h-4 w-4"><circle cx="8" cy="8" r="6.500" fill="#fbb424" /><path d="M8 14c-3 0-3-3-.5-3.500C8 7.500 13 8 13 10.500c3 0 3 3.500.5 3.500z" fill="#d8ecfa" /></svg>
        <span className="ml-1.5 whitespace-nowrap">21°C</span>
        <span className="ml-2 whitespace-nowrap">Mayorm....</span>
        <svg viewBox="0 0 10 8" className="ml-2 h-2 w-2.5"><path d="M1 6.500l4-4 4 4" fill="none" stroke="#fff" /></svg>
        <svg viewBox="0 0 12 12" className="ml-2.5 h-3 w-3" fill="none" stroke="#fff"><path d="M3 1h5M3 11h5" /><rect x="1" y="3.500" width="7" height="5" rx="1" /><circle cx="4.500" cy="6" r="1.200" /><path d="M8 5.500l2.500-1.500v4L8 6.500" /></svg>
        <svg viewBox="0 0 14 12" className="ml-1 h-3 w-3.5" fill="none" stroke="#fff"><rect x="4" y="4" width="8.500" height="5.500" /><path d="M5 5h4v3.500H5z" fill="#fff" /><path d="M1 2v3h3V2M2.500 5v5H5" /></svg>
        <svg viewBox="0 0 14 12" className="ml-1 h-3 w-3.5" fill="none" stroke="#fff"><path d="M1 4.500h2L6 2v8L3 7.500H1zM8 4.500c1 1 1 2 0 3M10 3c1.800 2 1.800 4 0 6M12 1.500c2.500 3 2.500 6 0 9" strokeWidth={0.900} /></svg>
        <svg viewBox="0 0 14 14" className="ml-1 h-3.5 w-3.5"><path d="M4 1l3 2-3 2-3-2zM10 1l3 2-3 2-3-2zM10 5l3 2-3 2-3-2z" fill="#fff" /><rect x="1" y="6" width="7" height="8" rx="1" fill="#e01c2c" /><text x="4.500" y="13" textAnchor="middle" fill="#fff" className="text-[7px] font-bold">1</text></svg>
        <time className="ml-1.5 text-[8px]">16:41</time>
        <svg viewBox="0 0 14 14" className="ml-[11px] h-3.5 w-3.5"><path d="M1 1.500h12v8H9L7 12V9.500H1z" fill="none" stroke="#fff" /></svg>
      </div>
    </footer>
  )
}

export default function App() {
  const columns = 'grid grid-cols-[181fr_182fr_181fr_168fr_162fr_145fr] gap-x-px'
  return (
    <div className="flex h-screen flex-col overflow-hidden bg-[#46606c] font-['Liberation_Sans',Arial,sans-serif]">
      <MenuBar />
      <DrawBar />
      <main className="flex min-h-0 flex-1 flex-col gap-px">
        <div className={`${columns} h-[283px] shrink-0`}>
          <Panel symbol="CL" frame="4 hours" extra="3,-" checked footer><CrudeFourHours /></Panel>
          <Panel symbol="CL" frame="1 hour" extra="3,40" footer><CrudeOneHour /></Panel>
          <Panel symbol="XAUUSD" frame="4 hours" footer><GoldFourHours /></Panel>
          <Panel symbol="XAUUSD" frame="1 hour" footer><GoldOneHour /></Panel>
          <Panel symbol="XBTUSD" frame="1 hour" footer faded><EmptyChart /></Panel>
          <Panel symbol="XBTUSD" footer><EmptyChart /></Panel>
        </div>
        <div className={`${columns} min-h-0 flex-1`}>
          <Panel symbol="EURUSD" frame="4 hours"><EuroFourHours /></Panel>
          <Panel symbol="EURUSD" frame="1 hour"><EuroOneHour /></Panel>
          <Panel symbol="USDJPY" frame="4 hours"><YenFourHours /></Panel>
          <Panel symbol="USDJPY" frame="1 hour"><YenOneHour /></Panel>
          <Panel symbol="GBPUSD" frame="4 hours"><PoundFourHours /></Panel>
          <Panel symbol="GBPUSD"><PoundOneHour /></Panel>
        </div>
      </main>
      <Taskbar />
    </div>
  )
}
